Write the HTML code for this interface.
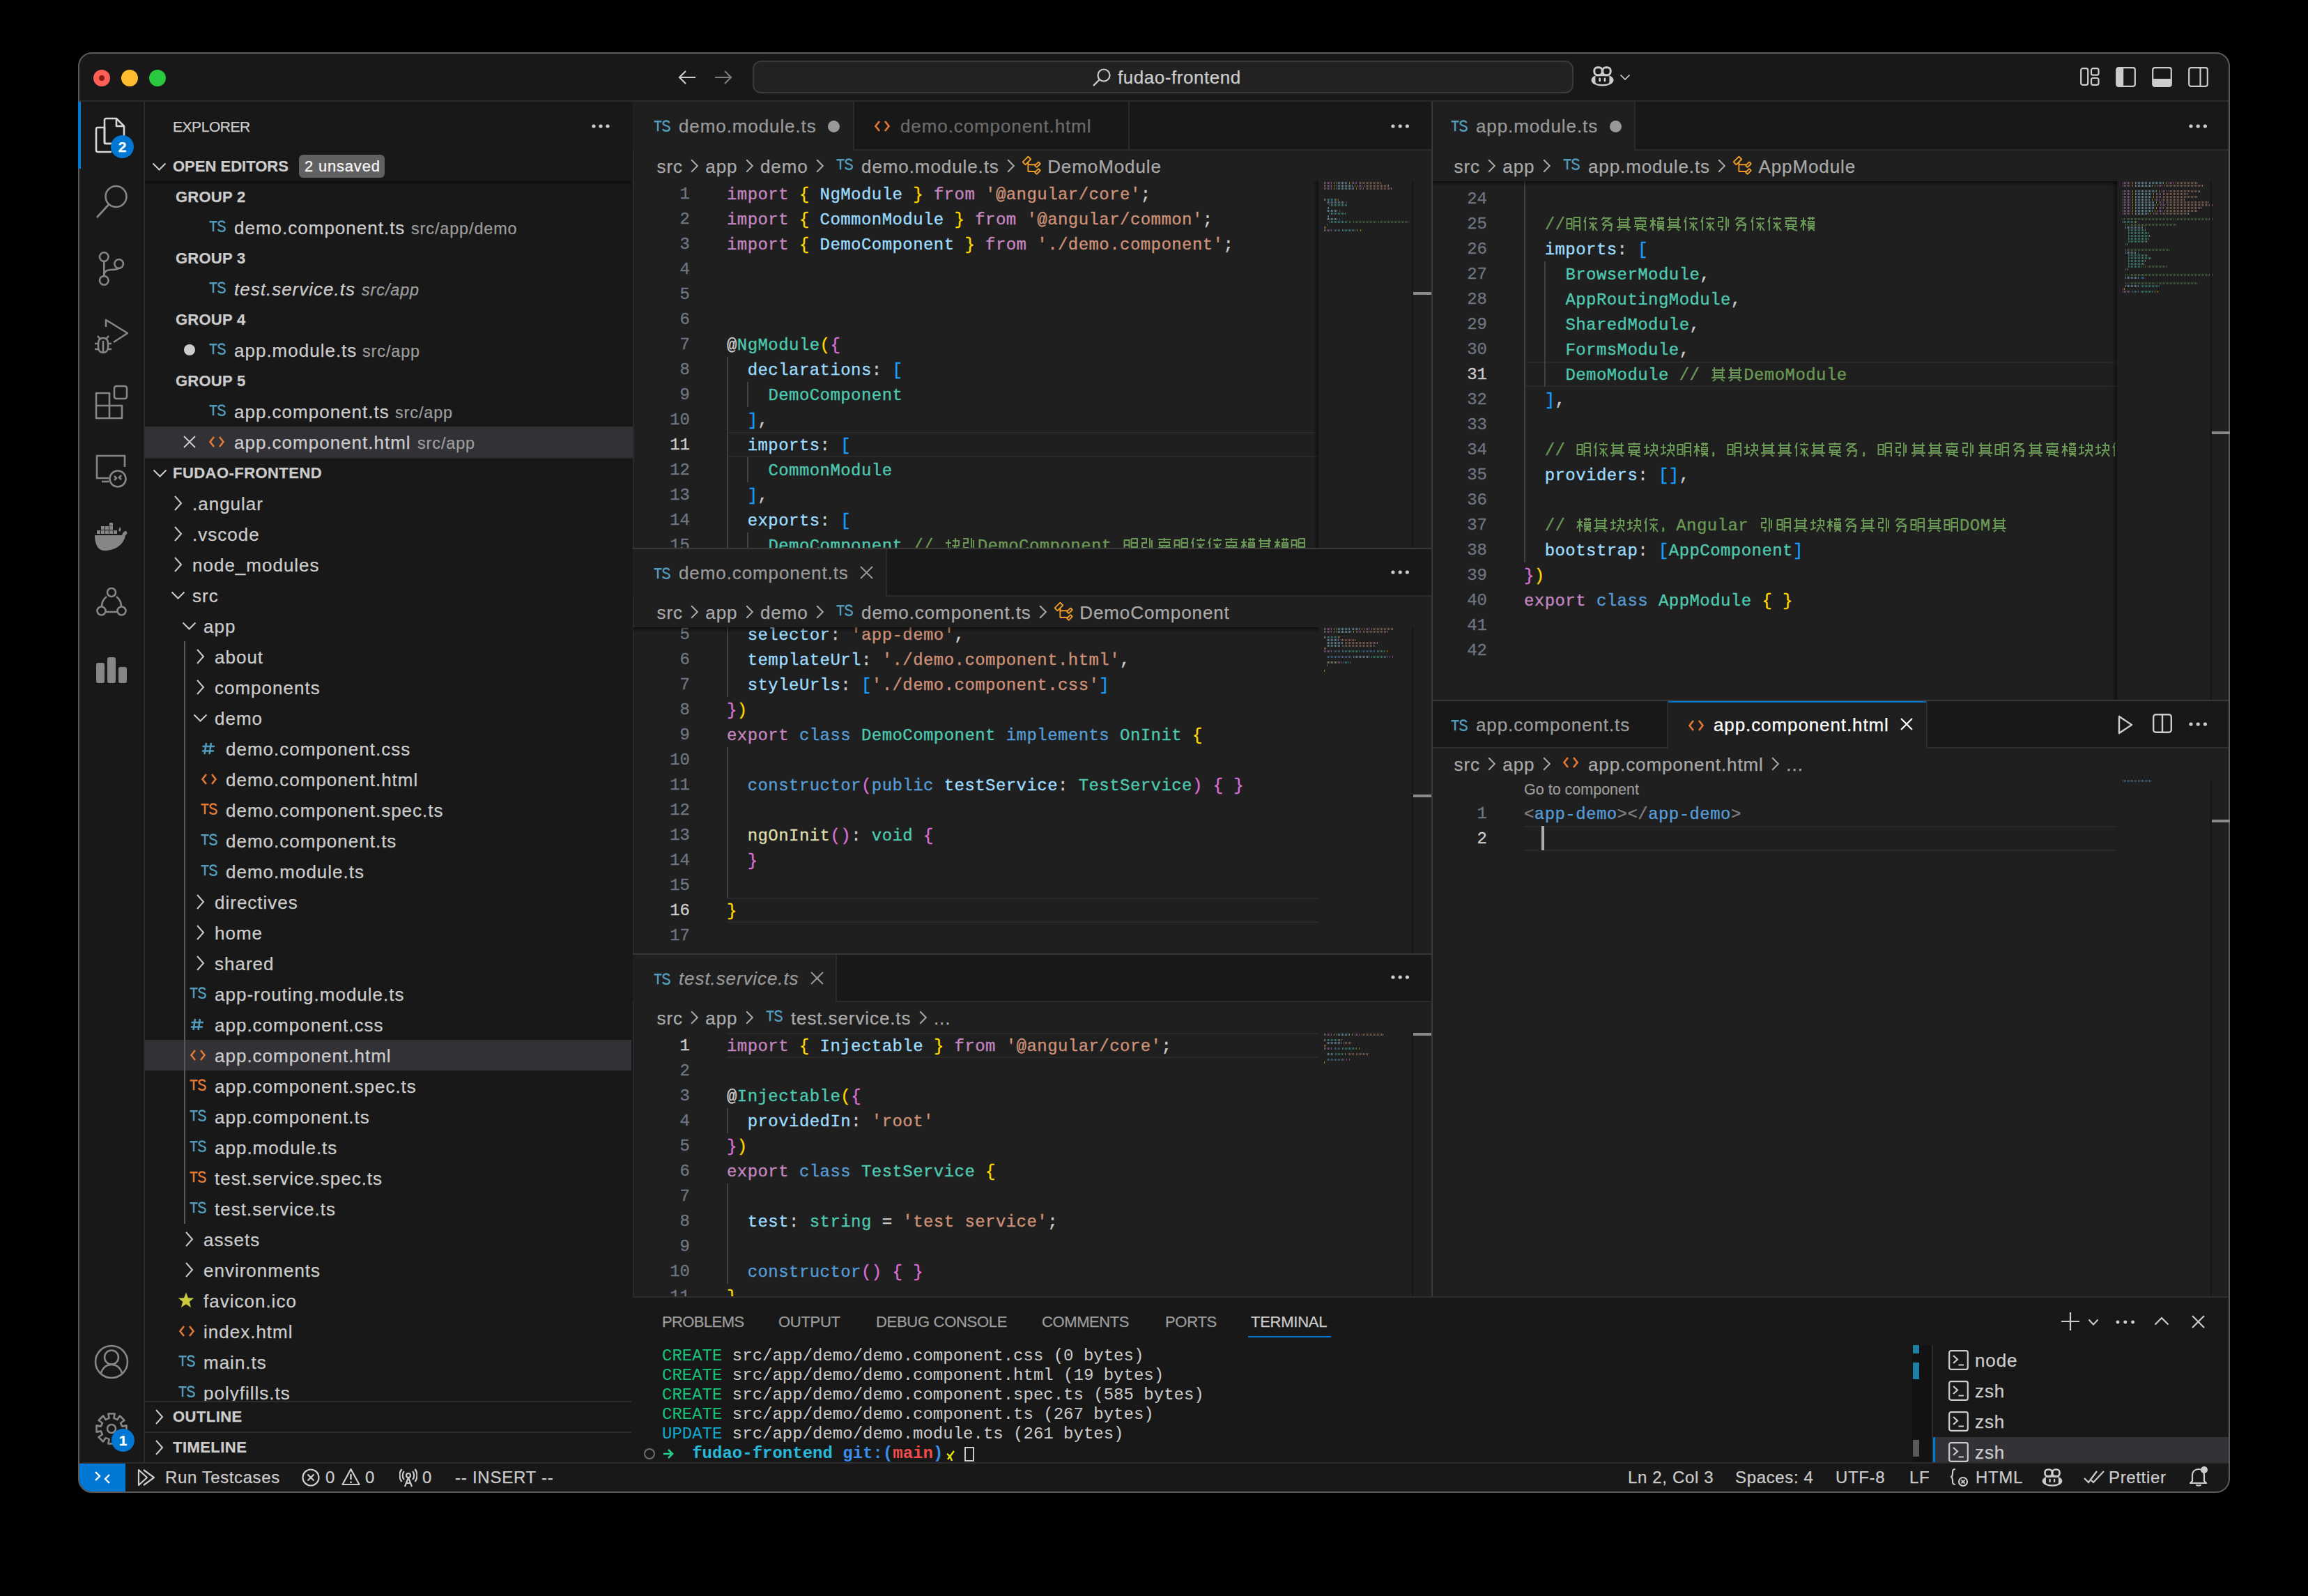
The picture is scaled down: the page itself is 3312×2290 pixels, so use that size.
<!DOCTYPE html><html><head><meta charset="utf-8"><style>
*{margin:0;padding:0;box-sizing:border-box}
html,body{width:3312px;height:2290px;background:#000;overflow:hidden}
body{position:relative;font-family:"Liberation Sans",sans-serif;color:#cccccc}
.a{position:absolute}
.win{position:absolute;left:112px;top:75px;width:3088px;height:2067px;border:2px solid #5a5a5a;border-radius:20px;background:#181818;overflow:hidden}
.ui{font-family:"Liberation Sans",sans-serif;white-space:pre;-webkit-text-stroke:0.25px currentColor}
.mono{font-family:"Liberation Mono",monospace;white-space:pre}
.code{font-family:"Liberation Mono",monospace;font-size:24px;letter-spacing:0.44px;line-height:36px;height:36px;white-space:pre;color:#cccccc;padding-top:1.5px;-webkit-text-stroke:0.35px currentColor}
.ln{font-family:"Liberation Mono",monospace;font-size:24px;line-height:36px;height:36px;text-align:right;color:#6e7681;white-space:pre;padding-top:0.5px;-webkit-text-stroke:0.3px currentColor}
.ln.cur{color:#cccccc}
.cj{display:inline-block;width:24px;height:36px;vertical-align:top;position:relative}
.cj svg{position:absolute;left:1px;top:5px;width:22px;height:22px}
.ig{position:absolute;width:2px;background:#404040}
.hl{position:absolute;border-top:2px solid #282828;border-bottom:2px solid #282828}
svg{display:block}
</style></head><body>
<svg width="0" height="0" style="position:absolute"><defs>
<symbol id="g0" viewBox="0 0 22 22"><path d="M1.5 4h7v14h-7zM1.5 11h7M11.5 2h8.5v19M11.5 2v19M11.5 8h8.5M11.5 14h8.5" fill="none" stroke="currentColor" stroke-width="1.9"/></symbol>
<symbol id="g1" viewBox="0 0 22 22"><path d="M1 7h8M5 2v19M5 8L1 16M5 8l4 6M11 3h10M14 1v5M18 1v5M12 8h8v6h-8zM12 11h8M11 17h10M16 14v3L12 21M16 17l5 4" fill="none" stroke="currentColor" stroke-width="1.9"/></symbol>
<symbol id="g2" viewBox="0 0 22 22"><path d="M5 1L2 9M4 6v15M9 4h12M15 1v3M10 9l4 3-4 6M15 9v12M15 13l6 8M20 9l-3 3" fill="none" stroke="currentColor" stroke-width="1.9"/></symbol>
<symbol id="g3" viewBox="0 0 22 22"><path d="M5 1v15M17 1v15M2 5h18M5 9h12M5 13h12M1 16h20M7 18l-4 3M15 18l4 3" fill="none" stroke="currentColor" stroke-width="1.9"/></symbol>
<symbol id="g4" viewBox="0 0 22 22"><path d="M1 8h8M5 3v14M1 18l8-3M11 5h9v7M10 12h11M15 1v11M15 12l-5 9M16 14l5 7" fill="none" stroke="currentColor" stroke-width="1.9"/></symbol>
<symbol id="g5" viewBox="0 0 22 22"><path d="M7 1L3 6M6 3h10l-12 9M8 6l11 6M5 13h13l-1 8-3-1M10 13l-5 8" fill="none" stroke="currentColor" stroke-width="1.9"/></symbol>
<symbol id="g6" viewBox="0 0 22 22"><path d="M2 2h7v6H3v7h6l-1 5-2-1M14 1v20M17 4v12" fill="none" stroke="currentColor" stroke-width="1.9"/></symbol>
<symbol id="g7" viewBox="0 0 22 22"><path d="M2 3h18M11 1v4M4 7h14v5H4zM2 15h18M8 12l-2 9M14 12v7l6 2M6 18h9" fill="none" stroke="currentColor" stroke-width="1.9"/></symbol>
<symbol id="gc" viewBox="0 0 22 22"><path d="M4 15q2 2 0 6" fill="none" stroke="currentColor" stroke-width="2.5"/></symbol>
</defs></svg>
<div class="win"></div>
<div class="a" style="left:114px;top:144px;width:3084px;height:2px;background:#2b2b2b;"></div>
<div class="a" style="left:206px;top:146px;width:2px;height:1952px;background:#2b2b2b;"></div>
<div class="a" style="left:908px;top:146px;width:2px;height:1952px;background:#2b2b2b;"></div>
<div class="a" style="left:910px;top:146px;width:2288px;height:1714px;background:#1f1f1f;"></div>
<div class="a" style="left:2054px;top:146px;width:2px;height:1714px;background:#383838;"></div>
<div class="a" style="left:908px;top:786px;width:1146px;height:2px;background:#383838;"></div>
<div class="a" style="left:908px;top:1368px;width:1146px;height:2px;background:#383838;"></div>
<div class="a" style="left:2056px;top:1004px;width:1142px;height:2px;background:#383838;"></div>
<div class="a" style="left:908px;top:1860px;width:2290px;height:2px;background:#2b2b2b;"></div>
<div class="a" style="left:908px;top:1862px;width:2290px;height:236px;background:#181818;"></div>
<div class="a" style="left:114px;top:2098px;width:3084px;height:2px;background:#2b2b2b;"></div>
<div class="a" style="left:134px;top:100px;width:24px;height:24px;border-radius:12px;background:#ff5f57"></div>
<div class="a" style="left:174px;top:100px;width:24px;height:24px;border-radius:12px;background:#febc2e"></div>
<div class="a" style="left:214px;top:100px;width:24px;height:24px;border-radius:12px;background:#28c840"></div>
<div class="a" style="left:142px;top:108px;width:8px;height:8px;border-radius:4px;background:#8c1a10"></div>
<svg class="a" style="left:973px;top:100px;" width="26" height="22" viewBox="0 0 26 22"><path d="M25 11H2M11 2L2 11L11 20" fill="none" stroke="#cccccc" stroke-width="2.2"/></svg>
<svg class="a" style="left:1025px;top:100px;" width="26" height="22" viewBox="0 0 26 22"><path d="M1 11H24M15 2L24 11L15 20" fill="none" stroke="#7d7d7d" stroke-width="2.2"/></svg>
<div class="a" style="left:1080px;top:87px;width:1178px;height:47px;border:2px solid #3a3a3a;border-radius:12px;background:#222222"></div>
<svg class="a" style="left:1567px;top:97px;" width="28" height="28" viewBox="0 0 28 28"><circle cx="17" cy="11" r="8.5" fill="none" stroke="#cccccc" stroke-width="2.2"/><path d="M11 17L2 26" stroke="#cccccc" stroke-width="2.4"/></svg>
<div class="a ui" style="left:1604px;top:88px;height:46px;line-height:46px;font-size:26px;color:#cccccc;letter-spacing:0.55px;font-weight:normal;font-style:normal;font-family:'Liberation Sans',sans-serif;">fudao-frontend</div>
<svg class="a" style="left:2283px;top:95px;" width="33" height="29" viewBox="0 0 33 29"><g><ellipse cx="16.5" cy="20" rx="16" ry="8.6" fill="#cccccc"/><path d="M6.4 14.2H26.4V23Q26.4 25.8 16.4 26Q6.4 25.8 6.4 23Z" fill="#181818"/><rect x="4.8" y="1.7" width="11.4" height="11" rx="4.6" fill="#181818" stroke="#cccccc" stroke-width="3"/><rect x="16.8" y="1.7" width="11.4" height="11" rx="4.6" fill="#181818" stroke="#cccccc" stroke-width="3"/><rect x="11.3" y="16.5" width="2.7" height="5.8" rx="1.35" fill="#cccccc"/><rect x="18.6" y="16.5" width="2.7" height="5.8" rx="1.35" fill="#cccccc"/></g></svg>
<svg class="a" style="left:2323.5px;top:106px;" width="16" height="9.5" viewBox="0 0 16 9.5"><path d="M1.5 1.5L8.0 8.0L14.5 1.5" fill="none" stroke="#cccccc" stroke-width="1.7"/></svg>
<svg class="a" style="left:2985px;top:97px;" width="28" height="26" viewBox="0 0 28 26"><rect x="1.2" y="1.2" width="10" height="23.6" rx="2.5" fill="none" stroke="#cccccc" stroke-width="2.2"/><rect x="16" y="1.2" width="10.5" height="9.5" rx="2.5" fill="none" stroke="#cccccc" stroke-width="2.2"/><rect x="16" y="15" width="10.5" height="9.8" rx="2.5" fill="none" stroke="#cccccc" stroke-width="2.2"/></svg>
<svg class="a" style="left:3036px;top:96px;" width="29" height="29" viewBox="0 0 29 29"><rect x="1.2" y="1.2" width="26.6" height="26.6" rx="3" fill="none" stroke="#cccccc" stroke-width="2.2"/><rect x="1.2" y="1.2" width="10" height="26.6" rx="2" fill="#cccccc"/></svg>
<svg class="a" style="left:3088px;top:96px;" width="29" height="29" viewBox="0 0 29 29"><rect x="1.2" y="1.2" width="26.6" height="26.6" rx="3" fill="none" stroke="#cccccc" stroke-width="2.2"/><rect x="1.2" y="17" width="26.6" height="10.8" rx="2" fill="#cccccc"/></svg>
<svg class="a" style="left:3140px;top:96px;" width="29" height="29" viewBox="0 0 29 29"><rect x="1.2" y="1.2" width="26.6" height="26.6" rx="3" fill="none" stroke="#cccccc" stroke-width="2.2"/><path d="M17.5 1.2V27.8" stroke="#cccccc" stroke-width="2.2"/></svg>
<div class="a" style="left:112px;top:146px;width:4px;height:96px;background:#0078d4;"></div>
<svg class="a" style="left:136px;top:168px;" width="46" height="52" viewBox="0 0 46 52"><g fill="none" stroke="#d7d7d7" stroke-width="2.6" stroke-linejoin="round"><path d="M4 15H14V38H30"/><path d="M4 15Q2 15 2 17.5V47.5Q2 50 4.5 50H24"/><path d="M16.5 2H31L42 13V35.5Q42 38 39.5 38H16.5Q14 38 14 35.5V4.5Q14 2 16.5 2Z"/><path d="M31 2.5V13H41.5"/></g></svg>
<div class="a" style="left:159px;top:194px;width:33px;height:33px;border-radius:17px;background:#0078d4"></div>
<div class="a ui" style="left:159px;top:194px;height:33px;line-height:33px;font-size:21px;color:#ffffff;letter-spacing:0px;font-weight:bold;font-style:normal;font-family:'Liberation Sans',sans-serif;width:33px;text-align:center">2</div>
<svg class="a" style="left:136px;top:264px;" width="50" height="52" viewBox="0 0 50 52"><circle cx="30.5" cy="18" r="15" fill="none" stroke="#868686" stroke-width="2.6"/><path d="M20 29.5L3 48" stroke="#868686" stroke-width="2.8"/></svg>
<svg class="a" style="left:140px;top:359px;" width="42" height="52" viewBox="0 0 42 52"><g fill="none" stroke="#868686" stroke-width="2.6"><circle cx="9.3" cy="9.6" r="6.3"/><circle cx="9.3" cy="43.4" r="6.3"/><circle cx="30.6" cy="19.6" r="6.3"/><path d="M9.3 16V37M9.3 37C9.3 30 13 28 20 28C26 28 29 27 30.3 26"/></g></svg>
<svg class="a" style="left:134px;top:456px;" width="52" height="52" viewBox="0 0 52 52"><g fill="none" stroke="#868686" stroke-width="2.6" stroke-linejoin="round"><path d="M18 13V3L49 22L29 35"/><path d="M7 37C7 31 10 29 14 29C18 29 21 31 21 37V42C21 47 18 50 14 50C10 50 7 47 7 42Z"/><path d="M9.5 30L6 26M18.5 30L22 26M2 37H7M21 37H26M2 45H7M21 45H26M14 33V49"/></g></svg>
<svg class="a" style="left:136px;top:552px;" width="48" height="50" viewBox="0 0 48 50"><g fill="none" stroke="#868686" stroke-width="2.6" stroke-linejoin="round"><rect x="28" y="2" width="18" height="18" rx="3"/><path d="M2 12H21V30H39V48H2Z"/><path d="M2 30H21V48"/></g></svg>
<svg class="a" style="left:136px;top:652px;" width="48" height="48" viewBox="0 0 48 48"><g fill="none" stroke="#868686" stroke-width="2.6"><path d="M20 34H3V2H43V18"/><path d="M10 39H20"/><circle cx="33" cy="35" r="11.5"/><path d="M28 31L31 34L28 37M38 30L35 33L38 36"/></g></svg>
<svg class="a" style="left:134px;top:750px;" width="50" height="42" viewBox="0 0 50 42"><g fill="#868686"><path d="M2 18H41C42 14 44 12 47 12C49 14 49 16 46 18C44 30 33 40 16 40C7 40 2 32 2 18Z"/><rect x="5" y="11" width="5" height="5"/><rect x="11" y="11" width="5" height="5"/><rect x="17" y="11" width="5" height="5"/><rect x="23" y="11" width="5" height="5"/><rect x="29" y="11" width="5" height="5"/><rect x="11" y="5" width="5" height="5"/><rect x="17" y="5" width="5" height="5"/><rect x="23" y="5" width="5" height="5"/><rect x="23" y="0" width="5" height="4.5"/><path d="M38 6C40 8 40 11 38 13L36 11Z"/></g></svg>
<svg class="a" style="left:138px;top:842px;" width="44" height="44" viewBox="0 0 44 44"><g fill="none" stroke="#868686" stroke-width="2.6"><circle cx="22" cy="8" r="6"/><circle cx="7.5" cy="34.5" r="6"/><circle cx="36.5" cy="34.5" r="6"/><path d="M13 36H31M15 14C10 18 8 22 8 28M29 14C34 18 36 22 36 28"/></g></svg>
<svg class="a" style="left:136px;top:942px;" width="48" height="40" viewBox="0 0 48 40"><g fill="#868686"><rect x="2" y="9" width="12" height="29" rx="3"/><rect x="18" y="1" width="12" height="37" rx="3"/><rect x="34" y="15" width="12" height="23" rx="3"/></g></svg>
<svg class="a" style="left:135px;top:1929px;" width="50" height="50" viewBox="0 0 50 50"><g fill="none" stroke="#868686" stroke-width="2.6"><circle cx="25" cy="25" r="23"/><circle cx="25" cy="18.5" r="10"/><path d="M10 41C13 32 19 29 25 29C31 29 37 32 40 41"/></g></svg>
<svg class="a" style="left:135px;top:2025px;" width="50" height="50" viewBox="0 0 50 50"><path d="M46.5 20.4 L46.5 29.6 L40.1 28.4 L38.1 33.3 L43.5 37.0 L37.0 43.5 L33.3 38.1 L28.4 40.1 L29.6 46.5 L20.4 46.5 L21.6 40.1 L16.7 38.1 L13.0 43.5 L6.5 37.0 L11.9 33.3 L9.9 28.4 L3.5 29.6 L3.5 20.4 L9.9 21.6 L11.9 16.7 L6.5 13.0 L13.0 6.5 L16.7 11.9 L21.6 9.9 L20.4 3.5 L29.6 3.5 L28.4 9.9 L33.3 11.9 L37.0 6.5 L43.5 13.0 L38.1 16.7 L40.1 21.6Z" fill="none" stroke="#868686" stroke-width="2.6" stroke-linejoin="round"/><circle cx="25" cy="25" r="6" fill="none" stroke="#868686" stroke-width="2.6"/></svg>
<div class="a" style="left:160px;top:2050px;width:33px;height:33px;border-radius:17px;background:#0078d4"></div>
<div class="a ui" style="left:160px;top:2050px;height:33px;line-height:33px;font-size:21px;color:#ffffff;letter-spacing:0px;font-weight:bold;font-style:normal;font-family:'Liberation Sans',sans-serif;width:33px;text-align:center">1</div>
<div class="a ui" style="left:248px;top:147px;height:70px;line-height:70px;font-size:21px;color:#cccccc;letter-spacing:-0.45px;font-weight:normal;font-style:normal;font-family:'Liberation Sans',sans-serif;">EXPLORER</div>
<svg class="a" style="left:847.6px;top:177px;" width="28" height="8" viewBox="0 0 28 8"><circle cx="4" cy="4" r="2.6" fill="#cccccc"/><circle cx="14" cy="4" r="2.6" fill="#cccccc"/><circle cx="24" cy="4" r="2.6" fill="#cccccc"/></svg>
<svg class="a" style="left:218px;top:233px;" width="21" height="12" viewBox="0 0 21 12"><path d="M1.5 1.5L10.5 10.5L19.5 1.5" fill="none" stroke="#cccccc" stroke-width="2"/></svg>
<div class="a ui" style="left:248px;top:217px;height:44px;line-height:44px;font-size:22px;color:#cccccc;letter-spacing:0px;font-weight:bold;font-style:normal;font-family:'Liberation Sans',sans-serif;">OPEN EDITORS</div>
<div class="a" style="left:429px;top:222px;width:123px;height:33px;border-radius:6px;background:#616161"></div>
<div class="a ui" style="left:437px;top:217px;height:44px;line-height:44px;font-size:22px;color:#f8f8f8;letter-spacing:0.8px;font-weight:normal;font-style:normal;font-family:'Liberation Sans',sans-serif;">2 unsaved</div>
<div class="a" style="left:208px;top:260px;width:698px;height:6px;background:linear-gradient(#0e0e0e,#181818)"></div>
<div class="a ui" style="left:252px;top:261px;height:44px;line-height:44px;font-size:22px;color:#cccccc;letter-spacing:0.25px;font-weight:bold;font-style:normal;font-family:'Liberation Sans',sans-serif;">GROUP 2</div>
<svg class="a" style="left:300px;top:316px;" width="24" height="17" viewBox="0 0 24 17"><path d="M0.5 2.3H11.6M6.05 2.3V16.2" stroke="#519aba" stroke-width="2.5" fill="none"/><path d="M22.6 4.3C21.7 2.6 20.1 1.5 17.9 1.5C15.3 1.5 13.6 2.9 13.6 4.8C13.6 6.9 15.4 7.7 18 8.4C20.9 9.2 22.8 10.1 22.8 12.3C22.8 14.6 20.8 15.9 17.9 15.9C15.6 15.9 13.8 14.9 12.8 13.2" fill="none" stroke="#519aba" stroke-width="2.4"/></svg>
<div class="a ui" style="left:336px;top:305px;height:44px;line-height:44px;font-size:26px;color:#cccccc;letter-spacing:1.0px;font-weight:normal;font-style:normal;font-family:'Liberation Sans',sans-serif;">demo.component.ts</div>
<div class="a ui" style="left:590px;top:306px;height:44px;line-height:44px;font-size:23.4px;color:#9d9d9d;letter-spacing:0.9px;font-weight:normal;font-style:normal;font-family:'Liberation Sans',sans-serif;">src/app/demo</div>
<div class="a ui" style="left:252px;top:349px;height:44px;line-height:44px;font-size:22px;color:#cccccc;letter-spacing:0.25px;font-weight:bold;font-style:normal;font-family:'Liberation Sans',sans-serif;">GROUP 3</div>
<svg class="a" style="left:300px;top:404px;" width="24" height="17" viewBox="0 0 24 17"><path d="M0.5 2.3H11.6M6.05 2.3V16.2" stroke="#519aba" stroke-width="2.5" fill="none"/><path d="M22.6 4.3C21.7 2.6 20.1 1.5 17.9 1.5C15.3 1.5 13.6 2.9 13.6 4.8C13.6 6.9 15.4 7.7 18 8.4C20.9 9.2 22.8 10.1 22.8 12.3C22.8 14.6 20.8 15.9 17.9 15.9C15.6 15.9 13.8 14.9 12.8 13.2" fill="none" stroke="#519aba" stroke-width="2.4"/></svg>
<div class="a ui" style="left:336px;top:393px;height:44px;line-height:44px;font-size:26px;color:#cccccc;letter-spacing:1.0px;font-weight:normal;font-style:italic;font-family:'Liberation Sans',sans-serif;">test.service.ts</div>
<div class="a ui" style="left:519px;top:394px;height:44px;line-height:44px;font-size:23.4px;color:#9d9d9d;letter-spacing:0.9px;font-weight:normal;font-style:italic;font-family:'Liberation Sans',sans-serif;">src/app</div>
<div class="a ui" style="left:252px;top:437px;height:44px;line-height:44px;font-size:22px;color:#cccccc;letter-spacing:0.25px;font-weight:bold;font-style:normal;font-family:'Liberation Sans',sans-serif;">GROUP 4</div>
<div class="a" style="left:264px;top:494px;width:16px;height:16px;border-radius:8px;background:#cccccc"></div>
<svg class="a" style="left:300px;top:492px;" width="24" height="17" viewBox="0 0 24 17"><path d="M0.5 2.3H11.6M6.05 2.3V16.2" stroke="#519aba" stroke-width="2.5" fill="none"/><path d="M22.6 4.3C21.7 2.6 20.1 1.5 17.9 1.5C15.3 1.5 13.6 2.9 13.6 4.8C13.6 6.9 15.4 7.7 18 8.4C20.9 9.2 22.8 10.1 22.8 12.3C22.8 14.6 20.8 15.9 17.9 15.9C15.6 15.9 13.8 14.9 12.8 13.2" fill="none" stroke="#519aba" stroke-width="2.4"/></svg>
<div class="a ui" style="left:336px;top:481px;height:44px;line-height:44px;font-size:26px;color:#cccccc;letter-spacing:1.0px;font-weight:normal;font-style:normal;font-family:'Liberation Sans',sans-serif;">app.module.ts</div>
<div class="a ui" style="left:520px;top:482px;height:44px;line-height:44px;font-size:23.4px;color:#9d9d9d;letter-spacing:0.9px;font-weight:normal;font-style:normal;font-family:'Liberation Sans',sans-serif;">src/app</div>
<div class="a ui" style="left:252px;top:525px;height:44px;line-height:44px;font-size:22px;color:#cccccc;letter-spacing:0.25px;font-weight:bold;font-style:normal;font-family:'Liberation Sans',sans-serif;">GROUP 5</div>
<svg class="a" style="left:300px;top:580px;" width="24" height="17" viewBox="0 0 24 17"><path d="M0.5 2.3H11.6M6.05 2.3V16.2" stroke="#519aba" stroke-width="2.5" fill="none"/><path d="M22.6 4.3C21.7 2.6 20.1 1.5 17.9 1.5C15.3 1.5 13.6 2.9 13.6 4.8C13.6 6.9 15.4 7.7 18 8.4C20.9 9.2 22.8 10.1 22.8 12.3C22.8 14.6 20.8 15.9 17.9 15.9C15.6 15.9 13.8 14.9 12.8 13.2" fill="none" stroke="#519aba" stroke-width="2.4"/></svg>
<div class="a ui" style="left:336px;top:569px;height:44px;line-height:44px;font-size:26px;color:#cccccc;letter-spacing:1.0px;font-weight:normal;font-style:normal;font-family:'Liberation Sans',sans-serif;">app.component.ts</div>
<div class="a ui" style="left:567px;top:570px;height:44px;line-height:44px;font-size:23.4px;color:#9d9d9d;letter-spacing:0.9px;font-weight:normal;font-style:normal;font-family:'Liberation Sans',sans-serif;">src/app</div>
<div class="a" style="left:208px;top:612px;width:700px;height:44px;background:#313136;"></div>
<svg class="a" style="left:263px;top:625px;" width="18" height="18" viewBox="0 0 18 18"><path d="M1 1L17 17M17 1L1 17" fill="none" stroke="#cccccc" stroke-width="2"/></svg>
<svg class="a" style="left:300px;top:625px;" width="22" height="18" viewBox="0 0 22 18"><path d="M7 2L1.5 9L7 16M15 2L20.5 9L15 16" fill="none" stroke="#e37933" stroke-width="2.6" stroke-linejoin="miter"/></svg>
<div class="a ui" style="left:336px;top:613px;height:44px;line-height:44px;font-size:26px;color:#cccccc;letter-spacing:1.0px;font-weight:normal;font-style:normal;font-family:'Liberation Sans',sans-serif;">app.component.html</div>
<div class="a ui" style="left:599px;top:614px;height:44px;line-height:44px;font-size:23.4px;color:#9d9d9d;letter-spacing:0.9px;font-weight:normal;font-style:normal;font-family:'Liberation Sans',sans-serif;">src/app</div>
<div class="a" style="left:208px;top:656px;width:700px;height:2px;background:#2b2b2b;"></div>
<svg class="a" style="left:219px;top:673px;" width="21" height="12" viewBox="0 0 21 12"><path d="M1.5 1.5L10.5 10.5L19.5 1.5" fill="none" stroke="#cccccc" stroke-width="2"/></svg>
<div class="a ui" style="left:248px;top:657px;height:44px;line-height:44px;font-size:22px;color:#cccccc;letter-spacing:0.45px;font-weight:bold;font-style:normal;font-family:'Liberation Sans',sans-serif;">FUDAO-FRONTEND</div>
<div class="a" style="left:208px;top:700px;width:698px;height:1310px;overflow:hidden">
<div class="a" style="left:0px;top:792px;width:700px;height:44px;background:#313136;"></div>
<div class="a" style="left:56px;top:220px;width:2px;height:836px;background:#585858;"></div>
<svg class="a" style="left:41px;top:10px;" width="13" height="24" viewBox="0 0 13 24"><path d="M2 2L11 12.0L2 22" fill="none" stroke="#cccccc" stroke-width="2"/></svg>
<div class="a ui" style="left:68px;top:1px;height:44px;line-height:44px;font-size:26px;color:#cccccc;letter-spacing:1.0px;font-weight:normal;font-style:normal;font-family:'Liberation Sans',sans-serif;">.angular</div>
<svg class="a" style="left:41px;top:54px;" width="13" height="24" viewBox="0 0 13 24"><path d="M2 2L11 12.0L2 22" fill="none" stroke="#cccccc" stroke-width="2"/></svg>
<div class="a ui" style="left:68px;top:45px;height:44px;line-height:44px;font-size:26px;color:#cccccc;letter-spacing:1.0px;font-weight:normal;font-style:normal;font-family:'Liberation Sans',sans-serif;">.vscode</div>
<svg class="a" style="left:41px;top:98px;" width="13" height="24" viewBox="0 0 13 24"><path d="M2 2L11 12.0L2 22" fill="none" stroke="#cccccc" stroke-width="2"/></svg>
<div class="a ui" style="left:68px;top:89px;height:44px;line-height:44px;font-size:26px;color:#cccccc;letter-spacing:1.0px;font-weight:normal;font-style:normal;font-family:'Liberation Sans',sans-serif;">node_modules</div>
<svg class="a" style="left:37px;top:148px;" width="21" height="12" viewBox="0 0 21 12"><path d="M1.5 1.5L10.5 10.5L19.5 1.5" fill="none" stroke="#cccccc" stroke-width="2"/></svg>
<div class="a ui" style="left:68px;top:133px;height:44px;line-height:44px;font-size:26px;color:#cccccc;letter-spacing:1.0px;font-weight:normal;font-style:normal;font-family:'Liberation Sans',sans-serif;">src</div>
<svg class="a" style="left:53px;top:192px;" width="21" height="12" viewBox="0 0 21 12"><path d="M1.5 1.5L10.5 10.5L19.5 1.5" fill="none" stroke="#cccccc" stroke-width="2"/></svg>
<div class="a ui" style="left:84px;top:177px;height:44px;line-height:44px;font-size:26px;color:#cccccc;letter-spacing:1.0px;font-weight:normal;font-style:normal;font-family:'Liberation Sans',sans-serif;">app</div>
<svg class="a" style="left:73px;top:230px;" width="13" height="24" viewBox="0 0 13 24"><path d="M2 2L11 12.0L2 22" fill="none" stroke="#cccccc" stroke-width="2"/></svg>
<div class="a ui" style="left:100px;top:221px;height:44px;line-height:44px;font-size:26px;color:#cccccc;letter-spacing:1.0px;font-weight:normal;font-style:normal;font-family:'Liberation Sans',sans-serif;">about</div>
<svg class="a" style="left:73px;top:274px;" width="13" height="24" viewBox="0 0 13 24"><path d="M2 2L11 12.0L2 22" fill="none" stroke="#cccccc" stroke-width="2"/></svg>
<div class="a ui" style="left:100px;top:265px;height:44px;line-height:44px;font-size:26px;color:#cccccc;letter-spacing:1.0px;font-weight:normal;font-style:normal;font-family:'Liberation Sans',sans-serif;">components</div>
<svg class="a" style="left:69px;top:324px;" width="21" height="12" viewBox="0 0 21 12"><path d="M1.5 1.5L10.5 10.5L19.5 1.5" fill="none" stroke="#cccccc" stroke-width="2"/></svg>
<div class="a ui" style="left:100px;top:309px;height:44px;line-height:44px;font-size:26px;color:#cccccc;letter-spacing:1.0px;font-weight:normal;font-style:normal;font-family:'Liberation Sans',sans-serif;">demo</div>
<svg class="a" style="left:81px;top:365px;" width="20" height="18" viewBox="0 0 20 18"><path d="M7 1L4.5 17M14 1L11.5 17M1.5 6H19M1 12.5H18" fill="none" stroke="#519aba" stroke-width="2.6"/></svg>
<div class="a ui" style="left:116px;top:353px;height:44px;line-height:44px;font-size:26px;color:#cccccc;letter-spacing:1.0px;font-weight:normal;font-style:normal;font-family:'Liberation Sans',sans-serif;">demo.component.css</div>
<svg class="a" style="left:81px;top:409px;" width="22" height="18" viewBox="0 0 22 18"><path d="M7 2L1.5 9L7 16M15 2L20.5 9L15 16" fill="none" stroke="#e37933" stroke-width="2.6" stroke-linejoin="miter"/></svg>
<div class="a ui" style="left:116px;top:397px;height:44px;line-height:44px;font-size:26px;color:#cccccc;letter-spacing:1.0px;font-weight:normal;font-style:normal;font-family:'Liberation Sans',sans-serif;">demo.component.html</div>
<svg class="a" style="left:80px;top:452px;" width="24" height="17" viewBox="0 0 24 17"><path d="M0.5 2.3H11.6M6.05 2.3V16.2" stroke="#e37933" stroke-width="2.5" fill="none"/><path d="M22.6 4.3C21.7 2.6 20.1 1.5 17.9 1.5C15.3 1.5 13.6 2.9 13.6 4.8C13.6 6.9 15.4 7.7 18 8.4C20.9 9.2 22.8 10.1 22.8 12.3C22.8 14.6 20.8 15.9 17.9 15.9C15.6 15.9 13.8 14.9 12.8 13.2" fill="none" stroke="#e37933" stroke-width="2.4"/></svg>
<div class="a ui" style="left:116px;top:441px;height:44px;line-height:44px;font-size:26px;color:#cccccc;letter-spacing:1.0px;font-weight:normal;font-style:normal;font-family:'Liberation Sans',sans-serif;">demo.component.spec.ts</div>
<svg class="a" style="left:80px;top:496px;" width="24" height="17" viewBox="0 0 24 17"><path d="M0.5 2.3H11.6M6.05 2.3V16.2" stroke="#519aba" stroke-width="2.5" fill="none"/><path d="M22.6 4.3C21.7 2.6 20.1 1.5 17.9 1.5C15.3 1.5 13.6 2.9 13.6 4.8C13.6 6.9 15.4 7.7 18 8.4C20.9 9.2 22.8 10.1 22.8 12.3C22.8 14.6 20.8 15.9 17.9 15.9C15.6 15.9 13.8 14.9 12.8 13.2" fill="none" stroke="#519aba" stroke-width="2.4"/></svg>
<div class="a ui" style="left:116px;top:485px;height:44px;line-height:44px;font-size:26px;color:#cccccc;letter-spacing:1.0px;font-weight:normal;font-style:normal;font-family:'Liberation Sans',sans-serif;">demo.component.ts</div>
<svg class="a" style="left:80px;top:540px;" width="24" height="17" viewBox="0 0 24 17"><path d="M0.5 2.3H11.6M6.05 2.3V16.2" stroke="#519aba" stroke-width="2.5" fill="none"/><path d="M22.6 4.3C21.7 2.6 20.1 1.5 17.9 1.5C15.3 1.5 13.6 2.9 13.6 4.8C13.6 6.9 15.4 7.7 18 8.4C20.9 9.2 22.8 10.1 22.8 12.3C22.8 14.6 20.8 15.9 17.9 15.9C15.6 15.9 13.8 14.9 12.8 13.2" fill="none" stroke="#519aba" stroke-width="2.4"/></svg>
<div class="a ui" style="left:116px;top:529px;height:44px;line-height:44px;font-size:26px;color:#cccccc;letter-spacing:1.0px;font-weight:normal;font-style:normal;font-family:'Liberation Sans',sans-serif;">demo.module.ts</div>
<svg class="a" style="left:73px;top:582px;" width="13" height="24" viewBox="0 0 13 24"><path d="M2 2L11 12.0L2 22" fill="none" stroke="#cccccc" stroke-width="2"/></svg>
<div class="a ui" style="left:100px;top:573px;height:44px;line-height:44px;font-size:26px;color:#cccccc;letter-spacing:1.0px;font-weight:normal;font-style:normal;font-family:'Liberation Sans',sans-serif;">directives</div>
<svg class="a" style="left:73px;top:626px;" width="13" height="24" viewBox="0 0 13 24"><path d="M2 2L11 12.0L2 22" fill="none" stroke="#cccccc" stroke-width="2"/></svg>
<div class="a ui" style="left:100px;top:617px;height:44px;line-height:44px;font-size:26px;color:#cccccc;letter-spacing:1.0px;font-weight:normal;font-style:normal;font-family:'Liberation Sans',sans-serif;">home</div>
<svg class="a" style="left:73px;top:670px;" width="13" height="24" viewBox="0 0 13 24"><path d="M2 2L11 12.0L2 22" fill="none" stroke="#cccccc" stroke-width="2"/></svg>
<div class="a ui" style="left:100px;top:661px;height:44px;line-height:44px;font-size:26px;color:#cccccc;letter-spacing:1.0px;font-weight:normal;font-style:normal;font-family:'Liberation Sans',sans-serif;">shared</div>
<svg class="a" style="left:64px;top:716px;" width="24" height="17" viewBox="0 0 24 17"><path d="M0.5 2.3H11.6M6.05 2.3V16.2" stroke="#519aba" stroke-width="2.5" fill="none"/><path d="M22.6 4.3C21.7 2.6 20.1 1.5 17.9 1.5C15.3 1.5 13.6 2.9 13.6 4.8C13.6 6.9 15.4 7.7 18 8.4C20.9 9.2 22.8 10.1 22.8 12.3C22.8 14.6 20.8 15.9 17.9 15.9C15.6 15.9 13.8 14.9 12.8 13.2" fill="none" stroke="#519aba" stroke-width="2.4"/></svg>
<div class="a ui" style="left:100px;top:705px;height:44px;line-height:44px;font-size:26px;color:#cccccc;letter-spacing:1.0px;font-weight:normal;font-style:normal;font-family:'Liberation Sans',sans-serif;">app-routing.module.ts</div>
<svg class="a" style="left:65px;top:761px;" width="20" height="18" viewBox="0 0 20 18"><path d="M7 1L4.5 17M14 1L11.5 17M1.5 6H19M1 12.5H18" fill="none" stroke="#519aba" stroke-width="2.6"/></svg>
<div class="a ui" style="left:100px;top:749px;height:44px;line-height:44px;font-size:26px;color:#cccccc;letter-spacing:1.0px;font-weight:normal;font-style:normal;font-family:'Liberation Sans',sans-serif;">app.component.css</div>
<svg class="a" style="left:65px;top:805px;" width="22" height="18" viewBox="0 0 22 18"><path d="M7 2L1.5 9L7 16M15 2L20.5 9L15 16" fill="none" stroke="#e37933" stroke-width="2.6" stroke-linejoin="miter"/></svg>
<div class="a ui" style="left:100px;top:793px;height:44px;line-height:44px;font-size:26px;color:#cccccc;letter-spacing:1.0px;font-weight:normal;font-style:normal;font-family:'Liberation Sans',sans-serif;">app.component.html</div>
<svg class="a" style="left:64px;top:848px;" width="24" height="17" viewBox="0 0 24 17"><path d="M0.5 2.3H11.6M6.05 2.3V16.2" stroke="#e37933" stroke-width="2.5" fill="none"/><path d="M22.6 4.3C21.7 2.6 20.1 1.5 17.9 1.5C15.3 1.5 13.6 2.9 13.6 4.8C13.6 6.9 15.4 7.7 18 8.4C20.9 9.2 22.8 10.1 22.8 12.3C22.8 14.6 20.8 15.9 17.9 15.9C15.6 15.9 13.8 14.9 12.8 13.2" fill="none" stroke="#e37933" stroke-width="2.4"/></svg>
<div class="a ui" style="left:100px;top:837px;height:44px;line-height:44px;font-size:26px;color:#cccccc;letter-spacing:1.0px;font-weight:normal;font-style:normal;font-family:'Liberation Sans',sans-serif;">app.component.spec.ts</div>
<svg class="a" style="left:64px;top:892px;" width="24" height="17" viewBox="0 0 24 17"><path d="M0.5 2.3H11.6M6.05 2.3V16.2" stroke="#519aba" stroke-width="2.5" fill="none"/><path d="M22.6 4.3C21.7 2.6 20.1 1.5 17.9 1.5C15.3 1.5 13.6 2.9 13.6 4.8C13.6 6.9 15.4 7.7 18 8.4C20.9 9.2 22.8 10.1 22.8 12.3C22.8 14.6 20.8 15.9 17.9 15.9C15.6 15.9 13.8 14.9 12.8 13.2" fill="none" stroke="#519aba" stroke-width="2.4"/></svg>
<div class="a ui" style="left:100px;top:881px;height:44px;line-height:44px;font-size:26px;color:#cccccc;letter-spacing:1.0px;font-weight:normal;font-style:normal;font-family:'Liberation Sans',sans-serif;">app.component.ts</div>
<svg class="a" style="left:64px;top:936px;" width="24" height="17" viewBox="0 0 24 17"><path d="M0.5 2.3H11.6M6.05 2.3V16.2" stroke="#519aba" stroke-width="2.5" fill="none"/><path d="M22.6 4.3C21.7 2.6 20.1 1.5 17.9 1.5C15.3 1.5 13.6 2.9 13.6 4.8C13.6 6.9 15.4 7.7 18 8.4C20.9 9.2 22.8 10.1 22.8 12.3C22.8 14.6 20.8 15.9 17.9 15.9C15.6 15.9 13.8 14.9 12.8 13.2" fill="none" stroke="#519aba" stroke-width="2.4"/></svg>
<div class="a ui" style="left:100px;top:925px;height:44px;line-height:44px;font-size:26px;color:#cccccc;letter-spacing:1.0px;font-weight:normal;font-style:normal;font-family:'Liberation Sans',sans-serif;">app.module.ts</div>
<svg class="a" style="left:64px;top:980px;" width="24" height="17" viewBox="0 0 24 17"><path d="M0.5 2.3H11.6M6.05 2.3V16.2" stroke="#e37933" stroke-width="2.5" fill="none"/><path d="M22.6 4.3C21.7 2.6 20.1 1.5 17.9 1.5C15.3 1.5 13.6 2.9 13.6 4.8C13.6 6.9 15.4 7.7 18 8.4C20.9 9.2 22.8 10.1 22.8 12.3C22.8 14.6 20.8 15.9 17.9 15.9C15.6 15.9 13.8 14.9 12.8 13.2" fill="none" stroke="#e37933" stroke-width="2.4"/></svg>
<div class="a ui" style="left:100px;top:969px;height:44px;line-height:44px;font-size:26px;color:#cccccc;letter-spacing:1.0px;font-weight:normal;font-style:normal;font-family:'Liberation Sans',sans-serif;">test.service.spec.ts</div>
<svg class="a" style="left:64px;top:1024px;" width="24" height="17" viewBox="0 0 24 17"><path d="M0.5 2.3H11.6M6.05 2.3V16.2" stroke="#519aba" stroke-width="2.5" fill="none"/><path d="M22.6 4.3C21.7 2.6 20.1 1.5 17.9 1.5C15.3 1.5 13.6 2.9 13.6 4.8C13.6 6.9 15.4 7.7 18 8.4C20.9 9.2 22.8 10.1 22.8 12.3C22.8 14.6 20.8 15.9 17.9 15.9C15.6 15.9 13.8 14.9 12.8 13.2" fill="none" stroke="#519aba" stroke-width="2.4"/></svg>
<div class="a ui" style="left:100px;top:1013px;height:44px;line-height:44px;font-size:26px;color:#cccccc;letter-spacing:1.0px;font-weight:normal;font-style:normal;font-family:'Liberation Sans',sans-serif;">test.service.ts</div>
<svg class="a" style="left:57px;top:1066px;" width="13" height="24" viewBox="0 0 13 24"><path d="M2 2L11 12.0L2 22" fill="none" stroke="#cccccc" stroke-width="2"/></svg>
<div class="a ui" style="left:84px;top:1057px;height:44px;line-height:44px;font-size:26px;color:#cccccc;letter-spacing:1.0px;font-weight:normal;font-style:normal;font-family:'Liberation Sans',sans-serif;">assets</div>
<svg class="a" style="left:57px;top:1110px;" width="13" height="24" viewBox="0 0 13 24"><path d="M2 2L11 12.0L2 22" fill="none" stroke="#cccccc" stroke-width="2"/></svg>
<div class="a ui" style="left:84px;top:1101px;height:44px;line-height:44px;font-size:26px;color:#cccccc;letter-spacing:1.0px;font-weight:normal;font-style:normal;font-family:'Liberation Sans',sans-serif;">environments</div>
<svg class="a" style="left:47px;top:1154px;" width="24" height="23" viewBox="0 0 24 23"><path d="M12 0.5L15 8.2L23.3 8.6L16.8 13.8L19 21.9L12 17.3L5 21.9L7.2 13.8L0.7 8.6L9 8.2Z" fill="#cbcb41"/></svg>
<div class="a ui" style="left:84px;top:1145px;height:44px;line-height:44px;font-size:26px;color:#cccccc;letter-spacing:1.0px;font-weight:normal;font-style:normal;font-family:'Liberation Sans',sans-serif;">favicon.ico</div>
<svg class="a" style="left:49px;top:1201px;" width="22" height="18" viewBox="0 0 22 18"><path d="M7 2L1.5 9L7 16M15 2L20.5 9L15 16" fill="none" stroke="#e37933" stroke-width="2.6" stroke-linejoin="miter"/></svg>
<div class="a ui" style="left:84px;top:1189px;height:44px;line-height:44px;font-size:26px;color:#cccccc;letter-spacing:1.0px;font-weight:normal;font-style:normal;font-family:'Liberation Sans',sans-serif;">index.html</div>
<svg class="a" style="left:48px;top:1244px;" width="24" height="17" viewBox="0 0 24 17"><path d="M0.5 2.3H11.6M6.05 2.3V16.2" stroke="#519aba" stroke-width="2.5" fill="none"/><path d="M22.6 4.3C21.7 2.6 20.1 1.5 17.9 1.5C15.3 1.5 13.6 2.9 13.6 4.8C13.6 6.9 15.4 7.7 18 8.4C20.9 9.2 22.8 10.1 22.8 12.3C22.8 14.6 20.8 15.9 17.9 15.9C15.6 15.9 13.8 14.9 12.8 13.2" fill="none" stroke="#519aba" stroke-width="2.4"/></svg>
<div class="a ui" style="left:84px;top:1233px;height:44px;line-height:44px;font-size:26px;color:#cccccc;letter-spacing:1.0px;font-weight:normal;font-style:normal;font-family:'Liberation Sans',sans-serif;">main.ts</div>
<svg class="a" style="left:48px;top:1288px;" width="24" height="17" viewBox="0 0 24 17"><path d="M0.5 2.3H11.6M6.05 2.3V16.2" stroke="#519aba" stroke-width="2.5" fill="none"/><path d="M22.6 4.3C21.7 2.6 20.1 1.5 17.9 1.5C15.3 1.5 13.6 2.9 13.6 4.8C13.6 6.9 15.4 7.7 18 8.4C20.9 9.2 22.8 10.1 22.8 12.3C22.8 14.6 20.8 15.9 17.9 15.9C15.6 15.9 13.8 14.9 12.8 13.2" fill="none" stroke="#519aba" stroke-width="2.4"/></svg>
<div class="a ui" style="left:84px;top:1277px;height:44px;line-height:44px;font-size:26px;color:#cccccc;letter-spacing:1.0px;font-weight:normal;font-style:normal;font-family:'Liberation Sans',sans-serif;">polyfills.ts</div>
</div>
<div class="a" style="left:208px;top:2010px;width:698px;height:2px;background:#2b2b2b;"></div>
<svg class="a" style="left:222px;top:2021px;" width="13" height="24" viewBox="0 0 13 24"><path d="M2 2L11 12.0L2 22" fill="none" stroke="#cccccc" stroke-width="2"/></svg>
<div class="a ui" style="left:248px;top:2011px;height:44px;line-height:44px;font-size:22px;color:#cccccc;letter-spacing:0.45px;font-weight:bold;font-style:normal;font-family:'Liberation Sans',sans-serif;">OUTLINE</div>
<div class="a" style="left:208px;top:2054px;width:698px;height:2px;background:#2b2b2b;"></div>
<svg class="a" style="left:222px;top:2065px;" width="13" height="24" viewBox="0 0 13 24"><path d="M2 2L11 12.0L2 22" fill="none" stroke="#cccccc" stroke-width="2"/></svg>
<div class="a ui" style="left:248px;top:2055px;height:44px;line-height:44px;font-size:22px;color:#cccccc;letter-spacing:0.45px;font-weight:bold;font-style:normal;font-family:'Liberation Sans',sans-serif;">TIMELINE</div>
<div class="a" style="left:908px;top:146px;width:1146px;height:70px;background:#181818;"></div>
<div class="a" style="left:908px;top:214px;width:1146px;height:2px;background:#2b2b2b;"></div>
<div class="a" style="left:908px;top:146px;width:318px;height:70px;background:#1f1f1f;"></div>
<div class="a" style="left:1224px;top:146px;width:2px;height:70px;background:#2b2b2b;"></div>
<svg class="a" style="left:938px;top:172px;" width="24" height="17" viewBox="0 0 24 17"><path d="M0.5 2.3H11.6M6.05 2.3V16.2" stroke="#519aba" stroke-width="2.5" fill="none"/><path d="M22.6 4.3C21.7 2.6 20.1 1.5 17.9 1.5C15.3 1.5 13.6 2.9 13.6 4.8C13.6 6.9 15.4 7.7 18 8.4C20.9 9.2 22.8 10.1 22.8 12.3C22.8 14.6 20.8 15.9 17.9 15.9C15.6 15.9 13.8 14.9 12.8 13.2" fill="none" stroke="#519aba" stroke-width="2.4"/></svg>
<div class="a ui" style="left:974px;top:146px;height:70px;line-height:70px;font-size:26px;color:#999999;letter-spacing:0.9px;font-weight:normal;font-style:normal;font-family:'Liberation Sans',sans-serif;">demo.module.ts</div>
<div class="a" style="left:1188px;top:173px;width:17px;height:17px;border-radius:9px;background:#999999"></div>
<div class="a" style="left:1226px;top:146px;width:395px;height:68px;background:#181818;"></div>
<div class="a" style="left:1619px;top:146px;width:2px;height:68px;background:#2b2b2b;"></div>
<svg class="a" style="left:1255px;top:172px;" width="22" height="18" viewBox="0 0 22 18"><path d="M7 2L1.5 9L7 16M15 2L20.5 9L15 16" fill="none" stroke="#e37933" stroke-width="2.6" stroke-linejoin="miter"/></svg>
<div class="a ui" style="left:1292px;top:146px;height:70px;line-height:70px;font-size:26px;color:#6b6b6b;letter-spacing:0.9px;font-weight:normal;font-style:normal;font-family:'Liberation Sans',sans-serif;">demo.component.html</div>
<svg class="a" style="left:1995px;top:177px;" width="28.4" height="8" viewBox="0 0 28.4 8"><circle cx="4.0" cy="4" r="2.6" fill="#cccccc"/><circle cx="14.2" cy="4" r="2.6" fill="#cccccc"/><circle cx="24.4" cy="4" r="2.6" fill="#cccccc"/></svg>
<div class="a" style="left:942.5px;top:216px;height:44px;display:flex;align-items:center;white-space:pre"><span class="ui" style="font-size:26px;letter-spacing:0.9px;color:#a9a9a9;line-height:44px;position:relative;top:1px">src</span><svg style="margin:0 10.25px 0 11.25px;position:relative;top:0px" width="11" height="20" viewBox="0 0 11 20"><path d="M1.2 1.2L9.8 10L1.2 18.8" fill="none" stroke="#a9a9a9" stroke-width="2"/></svg><span class="ui" style="font-size:26px;letter-spacing:0.9px;color:#a9a9a9;line-height:44px;position:relative;top:1px">app</span><svg style="margin:0 10.25px 0 11.25px;position:relative;top:0px" width="11" height="20" viewBox="0 0 11 20"><path d="M1.2 1.2L9.8 10L1.2 18.8" fill="none" stroke="#a9a9a9" stroke-width="2"/></svg><span class="ui" style="font-size:26px;letter-spacing:0.9px;color:#a9a9a9;line-height:44px;position:relative;top:1px">demo</span><svg style="margin:0 10.25px 0 11.25px;position:relative;top:0px" width="11" height="20" viewBox="0 0 11 20"><path d="M1.2 1.2L9.8 10L1.2 18.8" fill="none" stroke="#a9a9a9" stroke-width="2"/></svg><svg style="margin-left:8px;margin-right:12px;position:relative;top:-3px" width="24" height="17" viewBox="0 0 24 17"><path d="M0.5 2.3H11.6M6.05 2.3V16.2" stroke="#519aba" stroke-width="2.5" fill="none"/><path d="M22.6 4.3C21.7 2.6 20.1 1.5 17.9 1.5C15.3 1.5 13.6 2.9 13.6 4.8C13.6 6.9 15.4 7.7 18 8.4C20.9 9.2 22.8 10.1 22.8 12.3C22.8 14.6 20.8 15.9 17.9 15.9C15.6 15.9 13.8 14.9 12.8 13.2" fill="none" stroke="#519aba" stroke-width="2.4"/></svg><span class="ui" style="font-size:26px;letter-spacing:0.9px;color:#a9a9a9;line-height:44px;position:relative;top:1px">demo.module.ts</span><svg style="margin:0 10.25px 0 11.25px;position:relative;top:0px" width="11" height="20" viewBox="0 0 11 20"><path d="M1.2 1.2L9.8 10L1.2 18.8" fill="none" stroke="#a9a9a9" stroke-width="2"/></svg><svg style="margin-left:-1px;margin-right:7px;position:relative;top:-1px" width="31" height="31" viewBox="0 0 16 16"><path fill="#ee9d28" d="M11.34 9.71h.71l2.67-2.67v-.71L13.38 5h-.7l-1.82 1.81h-5V5.56l1.86-1.85V3l-2-2H5L1 5v.71l2 2h.71l1.14-1.15v5.79l.5.5H10v.52l1.33 1.34h.71l2.67-2.67v-.71L13.37 10h-.7l-1.86 1.85h-5v-4H10v.48l1.34 1.38zm1.69-3.65l.63.63-2 2-.63-.63 2-2zm0 5l.63.63-2 2-.63-.63 2-2zM3.35 6.65l-1.29-1.3 3.29-3.29 1.3 1.29-3.3 3.3z"/></svg><span class="ui" style="font-size:26px;letter-spacing:0.9px;color:#a9a9a9;line-height:44px;position:relative;top:1px">DemoModule</span></div>
<div class="a" style="left:908px;top:260px;width:984px;height:526px;overflow:hidden">
<div class="hl" style="left:135px;top:360px;width:849px;height:36px"></div>
<div class="ig" style="left:135.0px;top:252px;height:288px"></div>
<div class="ig" style="left:163.8px;top:288px;height:36px"></div>
<div class="ig" style="left:163.8px;top:396px;height:36px"></div>
<div class="ig" style="left:163.8px;top:504px;height:36px"></div>
<div class="a ln" style="left:2px;top:0px;width:80px">1</div>
<div class="a code" style="left:135px;top:0px"><span style="color:#c586c0">import</span><span style="color:#cccccc"> </span><span style="color:#ffd700">{</span><span style="color:#cccccc"> </span><span style="color:#9cdcfe">NgModule</span><span style="color:#cccccc"> </span><span style="color:#ffd700">}</span><span style="color:#cccccc"> </span><span style="color:#c586c0">from</span><span style="color:#cccccc"> </span><span style="color:#ce9178">'@angular/core'</span><span style="color:#cccccc">;</span></div>
<div class="a ln" style="left:2px;top:36px;width:80px">2</div>
<div class="a code" style="left:135px;top:36px"><span style="color:#c586c0">import</span><span style="color:#cccccc"> </span><span style="color:#ffd700">{</span><span style="color:#cccccc"> </span><span style="color:#9cdcfe">CommonModule</span><span style="color:#cccccc"> </span><span style="color:#ffd700">}</span><span style="color:#cccccc"> </span><span style="color:#c586c0">from</span><span style="color:#cccccc"> </span><span style="color:#ce9178">'@angular/common'</span><span style="color:#cccccc">;</span></div>
<div class="a ln" style="left:2px;top:72px;width:80px">3</div>
<div class="a code" style="left:135px;top:72px"><span style="color:#c586c0">import</span><span style="color:#cccccc"> </span><span style="color:#ffd700">{</span><span style="color:#cccccc"> </span><span style="color:#9cdcfe">DemoComponent</span><span style="color:#cccccc"> </span><span style="color:#ffd700">}</span><span style="color:#cccccc"> </span><span style="color:#c586c0">from</span><span style="color:#cccccc"> </span><span style="color:#ce9178">'./demo.component'</span><span style="color:#cccccc">;</span></div>
<div class="a ln" style="left:2px;top:108px;width:80px">4</div>
<div class="a ln" style="left:2px;top:144px;width:80px">5</div>
<div class="a ln" style="left:2px;top:180px;width:80px">6</div>
<div class="a ln" style="left:2px;top:216px;width:80px">7</div>
<div class="a code" style="left:135px;top:216px"><span style="color:#cccccc">@</span><span style="color:#4ec9b0">NgModule</span><span style="color:#ffd700">(</span><span style="color:#da70d6">{</span></div>
<div class="a ln" style="left:2px;top:252px;width:80px">8</div>
<div class="a code" style="left:135px;top:252px"><span style="color:#cccccc">  </span><span style="color:#9cdcfe">declarations</span><span style="color:#cccccc">: </span><span style="color:#179fff">[</span></div>
<div class="a ln" style="left:2px;top:288px;width:80px">9</div>
<div class="a code" style="left:135px;top:288px"><span style="color:#cccccc">    </span><span style="color:#4ec9b0">DemoComponent</span></div>
<div class="a ln" style="left:2px;top:324px;width:80px">10</div>
<div class="a code" style="left:135px;top:324px"><span style="color:#cccccc">  </span><span style="color:#179fff">]</span><span style="color:#cccccc">,</span></div>
<div class="a ln cur" style="left:2px;top:360px;width:80px">11</div>
<div class="a code" style="left:135px;top:360px"><span style="color:#cccccc">  </span><span style="color:#9cdcfe">imports</span><span style="color:#cccccc">: </span><span style="color:#179fff">[</span></div>
<div class="a ln" style="left:2px;top:396px;width:80px">12</div>
<div class="a code" style="left:135px;top:396px"><span style="color:#cccccc">    </span><span style="color:#4ec9b0">CommonModule</span></div>
<div class="a ln" style="left:2px;top:432px;width:80px">13</div>
<div class="a code" style="left:135px;top:432px"><span style="color:#cccccc">  </span><span style="color:#179fff">]</span><span style="color:#cccccc">,</span></div>
<div class="a ln" style="left:2px;top:468px;width:80px">14</div>
<div class="a code" style="left:135px;top:468px"><span style="color:#cccccc">  </span><span style="color:#9cdcfe">exports</span><span style="color:#cccccc">: </span><span style="color:#179fff">[</span></div>
<div class="a ln" style="left:2px;top:504px;width:80px">15</div>
<div class="a code" style="left:135px;top:504px"><span style="color:#cccccc">    </span><span style="color:#4ec9b0">DemoComponent</span><span style="color:#cccccc"> </span><span style="color:#6a9955">// <span class="cj"><svg viewBox="0 0 22 22"><use href="#g4"/></svg></span><span class="cj"><svg viewBox="0 0 22 22"><use href="#g6"/></svg></span>DemoComponent <span class="cj"><svg viewBox="0 0 22 22"><use href="#g0"/></svg></span><span class="cj"><svg viewBox="0 0 22 22"><use href="#g6"/></svg></span><span class="cj"><svg viewBox="0 0 22 22"><use href="#g7"/></svg></span><span class="cj"><svg viewBox="0 0 22 22"><use href="#g0"/></svg></span><span class="cj"><svg viewBox="0 0 22 22"><use href="#g2"/></svg></span><span class="cj"><svg viewBox="0 0 22 22"><use href="#g2"/></svg></span><span class="cj"><svg viewBox="0 0 22 22"><use href="#g7"/></svg></span><span class="cj"><svg viewBox="0 0 22 22"><use href="#g1"/></svg></span><span class="cj"><svg viewBox="0 0 22 22"><use href="#g3"/></svg></span><span class="cj"><svg viewBox="0 0 22 22"><use href="#g1"/></svg></span><span class="cj"><svg viewBox="0 0 22 22"><use href="#g0"/></svg></span></span></div>
<div class="a ln" style="left:2px;top:540px;width:80px">16</div>
<div class="a code" style="left:135px;top:540px"><span style="color:#cccccc">  </span><span style="color:#179fff">]</span></div>
<div class="a ln" style="left:2px;top:576px;width:80px">17</div>
<div class="a code" style="left:135px;top:576px"><span style="color:#da70d6">}</span><span style="color:#ffd700">)</span></div>
<div class="a ln" style="left:2px;top:612px;width:80px">18</div>
<div class="a code" style="left:135px;top:612px"><span style="color:#c586c0">export</span><span style="color:#cccccc"> </span><span style="color:#569cd6">class</span><span style="color:#cccccc"> </span><span style="color:#4ec9b0">DemoModule</span><span style="color:#cccccc"> </span><span style="color:#ffd700">{</span><span style="color:#cccccc"> </span><span style="color:#ffd700">}</span></div>
</div>
<div class="a" style="left:1900px;top:260px;width:130px;height:520px;overflow:hidden">
<div class="a" style="left:0px;top:1px;width:12px;height:3px;background:repeating-linear-gradient(90deg,#c586c0 0 1.4px,transparent 1.4px 2px);opacity:.5"></div>
<div class="a" style="left:14px;top:1px;width:2px;height:3px;background:repeating-linear-gradient(90deg,#ffd700 0 1.4px,transparent 1.4px 2px);opacity:.5"></div>
<div class="a" style="left:18px;top:1px;width:16px;height:3px;background:repeating-linear-gradient(90deg,#9cdcfe 0 1.4px,transparent 1.4px 2px);opacity:.5"></div>
<div class="a" style="left:36px;top:1px;width:2px;height:3px;background:repeating-linear-gradient(90deg,#ffd700 0 1.4px,transparent 1.4px 2px);opacity:.5"></div>
<div class="a" style="left:40px;top:1px;width:8px;height:3px;background:repeating-linear-gradient(90deg,#c586c0 0 1.4px,transparent 1.4px 2px);opacity:.5"></div>
<div class="a" style="left:50px;top:1px;width:30px;height:3px;background:repeating-linear-gradient(90deg,#ce9178 0 1.4px,transparent 1.4px 2px);opacity:.5"></div>
<div class="a" style="left:80px;top:1px;width:2px;height:3px;background:repeating-linear-gradient(90deg,#cccccc 0 1.4px,transparent 1.4px 2px);opacity:.5"></div>
<div class="a" style="left:0px;top:5px;width:12px;height:3px;background:repeating-linear-gradient(90deg,#c586c0 0 1.4px,transparent 1.4px 2px);opacity:.5"></div>
<div class="a" style="left:14px;top:5px;width:2px;height:3px;background:repeating-linear-gradient(90deg,#ffd700 0 1.4px,transparent 1.4px 2px);opacity:.5"></div>
<div class="a" style="left:18px;top:5px;width:24px;height:3px;background:repeating-linear-gradient(90deg,#9cdcfe 0 1.4px,transparent 1.4px 2px);opacity:.5"></div>
<div class="a" style="left:44px;top:5px;width:2px;height:3px;background:repeating-linear-gradient(90deg,#ffd700 0 1.4px,transparent 1.4px 2px);opacity:.5"></div>
<div class="a" style="left:48px;top:5px;width:8px;height:3px;background:repeating-linear-gradient(90deg,#c586c0 0 1.4px,transparent 1.4px 2px);opacity:.5"></div>
<div class="a" style="left:58px;top:5px;width:34px;height:3px;background:repeating-linear-gradient(90deg,#ce9178 0 1.4px,transparent 1.4px 2px);opacity:.5"></div>
<div class="a" style="left:92px;top:5px;width:2px;height:3px;background:repeating-linear-gradient(90deg,#cccccc 0 1.4px,transparent 1.4px 2px);opacity:.5"></div>
<div class="a" style="left:0px;top:9px;width:12px;height:3px;background:repeating-linear-gradient(90deg,#c586c0 0 1.4px,transparent 1.4px 2px);opacity:.5"></div>
<div class="a" style="left:14px;top:9px;width:2px;height:3px;background:repeating-linear-gradient(90deg,#ffd700 0 1.4px,transparent 1.4px 2px);opacity:.5"></div>
<div class="a" style="left:18px;top:9px;width:26px;height:3px;background:repeating-linear-gradient(90deg,#9cdcfe 0 1.4px,transparent 1.4px 2px);opacity:.5"></div>
<div class="a" style="left:46px;top:9px;width:2px;height:3px;background:repeating-linear-gradient(90deg,#ffd700 0 1.4px,transparent 1.4px 2px);opacity:.5"></div>
<div class="a" style="left:50px;top:9px;width:8px;height:3px;background:repeating-linear-gradient(90deg,#c586c0 0 1.4px,transparent 1.4px 2px);opacity:.5"></div>
<div class="a" style="left:60px;top:9px;width:36px;height:3px;background:repeating-linear-gradient(90deg,#ce9178 0 1.4px,transparent 1.4px 2px);opacity:.5"></div>
<div class="a" style="left:96px;top:9px;width:2px;height:3px;background:repeating-linear-gradient(90deg,#cccccc 0 1.4px,transparent 1.4px 2px);opacity:.5"></div>
<div class="a" style="left:0px;top:25px;width:2px;height:3px;background:repeating-linear-gradient(90deg,#cccccc 0 1.4px,transparent 1.4px 2px);opacity:.5"></div>
<div class="a" style="left:2px;top:25px;width:16px;height:3px;background:repeating-linear-gradient(90deg,#4ec9b0 0 1.4px,transparent 1.4px 2px);opacity:.5"></div>
<div class="a" style="left:18px;top:25px;width:2px;height:3px;background:repeating-linear-gradient(90deg,#ffd700 0 1.4px,transparent 1.4px 2px);opacity:.5"></div>
<div class="a" style="left:20px;top:25px;width:2px;height:3px;background:repeating-linear-gradient(90deg,#da70d6 0 1.4px,transparent 1.4px 2px);opacity:.5"></div>
<div class="a" style="left:4px;top:29px;width:24px;height:3px;background:repeating-linear-gradient(90deg,#9cdcfe 0 1.4px,transparent 1.4px 2px);opacity:.5"></div>
<div class="a" style="left:28px;top:29px;width:2px;height:3px;background:repeating-linear-gradient(90deg,#cccccc 0 1.4px,transparent 1.4px 2px);opacity:.5"></div>
<div class="a" style="left:32px;top:29px;width:2px;height:3px;background:repeating-linear-gradient(90deg,#179fff 0 1.4px,transparent 1.4px 2px);opacity:.5"></div>
<div class="a" style="left:8px;top:33px;width:26px;height:3px;background:repeating-linear-gradient(90deg,#4ec9b0 0 1.4px,transparent 1.4px 2px);opacity:.5"></div>
<div class="a" style="left:4px;top:37px;width:2px;height:3px;background:repeating-linear-gradient(90deg,#179fff 0 1.4px,transparent 1.4px 2px);opacity:.5"></div>
<div class="a" style="left:6px;top:37px;width:2px;height:3px;background:repeating-linear-gradient(90deg,#cccccc 0 1.4px,transparent 1.4px 2px);opacity:.5"></div>
<div class="a" style="left:4px;top:41px;width:14px;height:3px;background:repeating-linear-gradient(90deg,#9cdcfe 0 1.4px,transparent 1.4px 2px);opacity:.5"></div>
<div class="a" style="left:18px;top:41px;width:2px;height:3px;background:repeating-linear-gradient(90deg,#cccccc 0 1.4px,transparent 1.4px 2px);opacity:.5"></div>
<div class="a" style="left:22px;top:41px;width:2px;height:3px;background:repeating-linear-gradient(90deg,#179fff 0 1.4px,transparent 1.4px 2px);opacity:.5"></div>
<div class="a" style="left:8px;top:45px;width:24px;height:3px;background:repeating-linear-gradient(90deg,#4ec9b0 0 1.4px,transparent 1.4px 2px);opacity:.5"></div>
<div class="a" style="left:4px;top:49px;width:2px;height:3px;background:repeating-linear-gradient(90deg,#179fff 0 1.4px,transparent 1.4px 2px);opacity:.5"></div>
<div class="a" style="left:6px;top:49px;width:2px;height:3px;background:repeating-linear-gradient(90deg,#cccccc 0 1.4px,transparent 1.4px 2px);opacity:.5"></div>
<div class="a" style="left:4px;top:53px;width:14px;height:3px;background:repeating-linear-gradient(90deg,#9cdcfe 0 1.4px,transparent 1.4px 2px);opacity:.5"></div>
<div class="a" style="left:18px;top:53px;width:2px;height:3px;background:repeating-linear-gradient(90deg,#cccccc 0 1.4px,transparent 1.4px 2px);opacity:.5"></div>
<div class="a" style="left:22px;top:53px;width:2px;height:3px;background:repeating-linear-gradient(90deg,#179fff 0 1.4px,transparent 1.4px 2px);opacity:.5"></div>
<div class="a" style="left:8px;top:57px;width:26px;height:3px;background:repeating-linear-gradient(90deg,#4ec9b0 0 1.4px,transparent 1.4px 2px);opacity:.5"></div>
<div class="a" style="left:36px;top:57px;width:4px;height:3px;background:repeating-linear-gradient(90deg,#6a9955 0 1.4px,transparent 1.4px 2px);opacity:.5"></div>
<div class="a" style="left:42px;top:57px;width:34px;height:3px;background:repeating-linear-gradient(90deg,#6a9955 0 1.4px,transparent 1.4px 2px);opacity:.5"></div>
<div class="a" style="left:78px;top:57px;width:44px;height:3px;background:repeating-linear-gradient(90deg,#6a9955 0 1.4px,transparent 1.4px 2px);opacity:.5"></div>
<div class="a" style="left:4px;top:61px;width:2px;height:3px;background:repeating-linear-gradient(90deg,#179fff 0 1.4px,transparent 1.4px 2px);opacity:.5"></div>
<div class="a" style="left:0px;top:65px;width:2px;height:3px;background:repeating-linear-gradient(90deg,#da70d6 0 1.4px,transparent 1.4px 2px);opacity:.5"></div>
<div class="a" style="left:2px;top:65px;width:2px;height:3px;background:repeating-linear-gradient(90deg,#ffd700 0 1.4px,transparent 1.4px 2px);opacity:.5"></div>
<div class="a" style="left:0px;top:69px;width:12px;height:3px;background:repeating-linear-gradient(90deg,#c586c0 0 1.4px,transparent 1.4px 2px);opacity:.5"></div>
<div class="a" style="left:14px;top:69px;width:10px;height:3px;background:repeating-linear-gradient(90deg,#569cd6 0 1.4px,transparent 1.4px 2px);opacity:.5"></div>
<div class="a" style="left:26px;top:69px;width:20px;height:3px;background:repeating-linear-gradient(90deg,#4ec9b0 0 1.4px,transparent 1.4px 2px);opacity:.5"></div>
<div class="a" style="left:48px;top:69px;width:2px;height:3px;background:repeating-linear-gradient(90deg,#ffd700 0 1.4px,transparent 1.4px 2px);opacity:.5"></div>
<div class="a" style="left:52px;top:69px;width:2px;height:3px;background:repeating-linear-gradient(90deg,#ffd700 0 1.4px,transparent 1.4px 2px);opacity:.5"></div>
</div>
<div class="a" style="left:1884px;top:260px;width:8px;height:526px;background:linear-gradient(90deg,rgba(0,0,0,0),rgba(0,0,0,.45))"></div>
<div class="a" style="left:2026px;top:260px;width:2px;height:526px;background:#161616;"></div>
<div class="a" style="left:2028px;top:419px;width:26px;height:4px;background:#8a8a8a;"></div>
<div class="a" style="left:908px;top:788px;width:1146px;height:68px;background:#181818;"></div>
<div class="a" style="left:908px;top:854px;width:1146px;height:2px;background:#2b2b2b;"></div>
<div class="a" style="left:908px;top:788px;width:365px;height:68px;background:#1f1f1f;"></div>
<div class="a" style="left:1271px;top:788px;width:2px;height:68px;background:#2b2b2b;"></div>
<svg class="a" style="left:938px;top:814px;" width="24" height="17" viewBox="0 0 24 17"><path d="M0.5 2.3H11.6M6.05 2.3V16.2" stroke="#519aba" stroke-width="2.5" fill="none"/><path d="M22.6 4.3C21.7 2.6 20.1 1.5 17.9 1.5C15.3 1.5 13.6 2.9 13.6 4.8C13.6 6.9 15.4 7.7 18 8.4C20.9 9.2 22.8 10.1 22.8 12.3C22.8 14.6 20.8 15.9 17.9 15.9C15.6 15.9 13.8 14.9 12.8 13.2" fill="none" stroke="#519aba" stroke-width="2.4"/></svg>
<div class="a ui" style="left:974px;top:788px;height:68px;line-height:68px;font-size:26px;color:#999999;letter-spacing:0.9px;font-weight:normal;font-style:normal;font-family:'Liberation Sans',sans-serif;">demo.component.ts</div>
<svg class="a" style="left:1234px;top:812px;" width="19" height="19" viewBox="0 0 19 19"><path d="M1 1L18 18M18 1L1 18" fill="none" stroke="#999999" stroke-width="2"/></svg>
<svg class="a" style="left:1995px;top:817px;" width="28.4" height="8" viewBox="0 0 28.4 8"><circle cx="4.0" cy="4" r="2.6" fill="#cccccc"/><circle cx="14.2" cy="4" r="2.6" fill="#cccccc"/><circle cx="24.4" cy="4" r="2.6" fill="#cccccc"/></svg>
<div class="a" style="left:942.5px;top:856px;height:44px;display:flex;align-items:center;white-space:pre"><span class="ui" style="font-size:26px;letter-spacing:0.9px;color:#a9a9a9;line-height:44px;position:relative;top:1px">src</span><svg style="margin:0 10.25px 0 11.25px;position:relative;top:0px" width="11" height="20" viewBox="0 0 11 20"><path d="M1.2 1.2L9.8 10L1.2 18.8" fill="none" stroke="#a9a9a9" stroke-width="2"/></svg><span class="ui" style="font-size:26px;letter-spacing:0.9px;color:#a9a9a9;line-height:44px;position:relative;top:1px">app</span><svg style="margin:0 10.25px 0 11.25px;position:relative;top:0px" width="11" height="20" viewBox="0 0 11 20"><path d="M1.2 1.2L9.8 10L1.2 18.8" fill="none" stroke="#a9a9a9" stroke-width="2"/></svg><span class="ui" style="font-size:26px;letter-spacing:0.9px;color:#a9a9a9;line-height:44px;position:relative;top:1px">demo</span><svg style="margin:0 10.25px 0 11.25px;position:relative;top:0px" width="11" height="20" viewBox="0 0 11 20"><path d="M1.2 1.2L9.8 10L1.2 18.8" fill="none" stroke="#a9a9a9" stroke-width="2"/></svg><svg style="margin-left:8px;margin-right:12px;position:relative;top:-3px" width="24" height="17" viewBox="0 0 24 17"><path d="M0.5 2.3H11.6M6.05 2.3V16.2" stroke="#519aba" stroke-width="2.5" fill="none"/><path d="M22.6 4.3C21.7 2.6 20.1 1.5 17.9 1.5C15.3 1.5 13.6 2.9 13.6 4.8C13.6 6.9 15.4 7.7 18 8.4C20.9 9.2 22.8 10.1 22.8 12.3C22.8 14.6 20.8 15.9 17.9 15.9C15.6 15.9 13.8 14.9 12.8 13.2" fill="none" stroke="#519aba" stroke-width="2.4"/></svg><span class="ui" style="font-size:26px;letter-spacing:0.9px;color:#a9a9a9;line-height:44px;position:relative;top:1px">demo.component.ts</span><svg style="margin:0 10.25px 0 11.25px;position:relative;top:0px" width="11" height="20" viewBox="0 0 11 20"><path d="M1.2 1.2L9.8 10L1.2 18.8" fill="none" stroke="#a9a9a9" stroke-width="2"/></svg><svg style="margin-left:-1px;margin-right:7px;position:relative;top:-1px" width="31" height="31" viewBox="0 0 16 16"><path fill="#ee9d28" d="M11.34 9.71h.71l2.67-2.67v-.71L13.38 5h-.7l-1.82 1.81h-5V5.56l1.86-1.85V3l-2-2H5L1 5v.71l2 2h.71l1.14-1.15v5.79l.5.5H10v.52l1.33 1.34h.71l2.67-2.67v-.71L13.37 10h-.7l-1.86 1.85h-5v-4H10v.48l1.34 1.38zm1.69-3.65l.63.63-2 2-.63-.63 2-2zm0 5l.63.63-2 2-.63-.63 2-2zM3.35 6.65l-1.29-1.3 3.29-3.29 1.3 1.29-3.3 3.3z"/></svg><span class="ui" style="font-size:26px;letter-spacing:0.9px;color:#a9a9a9;line-height:44px;position:relative;top:1px">DemoComponent</span></div>
<div class="a" style="left:908px;top:900px;width:984px;height:468px;overflow:hidden">
<div class="hl" style="left:135px;top:388px;width:849px;height:36px"></div>
<div class="ig" style="left:135.0px;top:-44px;height:144px"></div>
<div class="ig" style="left:135.0px;top:172px;height:216px"></div>
<div class="a ln" style="left:2px;top:-44px;width:80px">4</div>
<div class="a code" style="left:135px;top:-44px"><span style="color:#cccccc">@</span><span style="color:#4ec9b0">Component</span><span style="color:#ffd700">(</span><span style="color:#da70d6">{</span></div>
<div class="a ln" style="left:2px;top:-8px;width:80px">5</div>
<div class="a code" style="left:135px;top:-8px"><span style="color:#cccccc">  </span><span style="color:#9cdcfe">selector</span><span style="color:#cccccc">: </span><span style="color:#ce9178">'app-demo'</span><span style="color:#cccccc">,</span></div>
<div class="a ln" style="left:2px;top:28px;width:80px">6</div>
<div class="a code" style="left:135px;top:28px"><span style="color:#cccccc">  </span><span style="color:#9cdcfe">templateUrl</span><span style="color:#cccccc">: </span><span style="color:#ce9178">'./demo.component.html'</span><span style="color:#cccccc">,</span></div>
<div class="a ln" style="left:2px;top:64px;width:80px">7</div>
<div class="a code" style="left:135px;top:64px"><span style="color:#cccccc">  </span><span style="color:#9cdcfe">styleUrls</span><span style="color:#cccccc">: </span><span style="color:#179fff">[</span><span style="color:#ce9178">'./demo.component.css'</span><span style="color:#179fff">]</span></div>
<div class="a ln" style="left:2px;top:100px;width:80px">8</div>
<div class="a code" style="left:135px;top:100px"><span style="color:#da70d6">}</span><span style="color:#ffd700">)</span></div>
<div class="a ln" style="left:2px;top:136px;width:80px">9</div>
<div class="a code" style="left:135px;top:136px"><span style="color:#c586c0">export</span><span style="color:#cccccc"> </span><span style="color:#569cd6">class</span><span style="color:#cccccc"> </span><span style="color:#4ec9b0">DemoComponent</span><span style="color:#cccccc"> </span><span style="color:#569cd6">implements</span><span style="color:#cccccc"> </span><span style="color:#4ec9b0">OnInit</span><span style="color:#cccccc"> </span><span style="color:#ffd700">{</span></div>
<div class="a ln" style="left:2px;top:172px;width:80px">10</div>
<div class="a ln" style="left:2px;top:208px;width:80px">11</div>
<div class="a code" style="left:135px;top:208px"><span style="color:#cccccc">  </span><span style="color:#569cd6">constructor</span><span style="color:#da70d6">(</span><span style="color:#569cd6">public</span><span style="color:#cccccc"> </span><span style="color:#9cdcfe">testService</span><span style="color:#cccccc">: </span><span style="color:#4ec9b0">TestService</span><span style="color:#da70d6">)</span><span style="color:#cccccc"> </span><span style="color:#da70d6">{</span><span style="color:#cccccc"> </span><span style="color:#da70d6">}</span></div>
<div class="a ln" style="left:2px;top:244px;width:80px">12</div>
<div class="a ln" style="left:2px;top:280px;width:80px">13</div>
<div class="a code" style="left:135px;top:280px"><span style="color:#cccccc">  </span><span style="color:#dcdcaa">ngOnInit</span><span style="color:#da70d6">()</span><span style="color:#cccccc">: </span><span style="color:#4ec9b0">void</span><span style="color:#cccccc"> </span><span style="color:#da70d6">{</span></div>
<div class="a ln" style="left:2px;top:316px;width:80px">14</div>
<div class="a code" style="left:135px;top:316px"><span style="color:#cccccc">  </span><span style="color:#da70d6">}</span></div>
<div class="a ln" style="left:2px;top:352px;width:80px">15</div>
<div class="a ln cur" style="left:2px;top:388px;width:80px">16</div>
<div class="a code" style="left:135px;top:388px"><span style="color:#ffd700">}</span></div>
<div class="a ln" style="left:2px;top:424px;width:80px">17</div>
</div>
<div class="a" style="left:1900px;top:900px;width:130px;height:468px;overflow:hidden">
<div class="a" style="left:0px;top:1px;width:12px;height:3px;background:repeating-linear-gradient(90deg,#c586c0 0 1.4px,transparent 1.4px 2px);opacity:.5"></div>
<div class="a" style="left:14px;top:1px;width:2px;height:3px;background:repeating-linear-gradient(90deg,#ffd700 0 1.4px,transparent 1.4px 2px);opacity:.5"></div>
<div class="a" style="left:18px;top:1px;width:20px;height:3px;background:repeating-linear-gradient(90deg,#9cdcfe 0 1.4px,transparent 1.4px 2px);opacity:.5"></div>
<div class="a" style="left:40px;top:1px;width:12px;height:3px;background:repeating-linear-gradient(90deg,#9cdcfe 0 1.4px,transparent 1.4px 2px);opacity:.5"></div>
<div class="a" style="left:54px;top:1px;width:2px;height:3px;background:repeating-linear-gradient(90deg,#ffd700 0 1.4px,transparent 1.4px 2px);opacity:.5"></div>
<div class="a" style="left:58px;top:1px;width:8px;height:3px;background:repeating-linear-gradient(90deg,#c586c0 0 1.4px,transparent 1.4px 2px);opacity:.5"></div>
<div class="a" style="left:68px;top:1px;width:30px;height:3px;background:repeating-linear-gradient(90deg,#ce9178 0 1.4px,transparent 1.4px 2px);opacity:.5"></div>
<div class="a" style="left:98px;top:1px;width:2px;height:3px;background:repeating-linear-gradient(90deg,#cccccc 0 1.4px,transparent 1.4px 2px);opacity:.5"></div>
<div class="a" style="left:0px;top:5px;width:12px;height:3px;background:repeating-linear-gradient(90deg,#c586c0 0 1.4px,transparent 1.4px 2px);opacity:.5"></div>
<div class="a" style="left:14px;top:5px;width:2px;height:3px;background:repeating-linear-gradient(90deg,#ffd700 0 1.4px,transparent 1.4px 2px);opacity:.5"></div>
<div class="a" style="left:18px;top:5px;width:22px;height:3px;background:repeating-linear-gradient(90deg,#9cdcfe 0 1.4px,transparent 1.4px 2px);opacity:.5"></div>
<div class="a" style="left:42px;top:5px;width:2px;height:3px;background:repeating-linear-gradient(90deg,#ffd700 0 1.4px,transparent 1.4px 2px);opacity:.5"></div>
<div class="a" style="left:46px;top:5px;width:8px;height:3px;background:repeating-linear-gradient(90deg,#c586c0 0 1.4px,transparent 1.4px 2px);opacity:.5"></div>
<div class="a" style="left:56px;top:5px;width:34px;height:3px;background:repeating-linear-gradient(90deg,#ce9178 0 1.4px,transparent 1.4px 2px);opacity:.5"></div>
<div class="a" style="left:90px;top:5px;width:2px;height:3px;background:repeating-linear-gradient(90deg,#cccccc 0 1.4px,transparent 1.4px 2px);opacity:.5"></div>
<div class="a" style="left:0px;top:13px;width:2px;height:3px;background:repeating-linear-gradient(90deg,#cccccc 0 1.4px,transparent 1.4px 2px);opacity:.5"></div>
<div class="a" style="left:2px;top:13px;width:18px;height:3px;background:repeating-linear-gradient(90deg,#4ec9b0 0 1.4px,transparent 1.4px 2px);opacity:.5"></div>
<div class="a" style="left:20px;top:13px;width:2px;height:3px;background:repeating-linear-gradient(90deg,#ffd700 0 1.4px,transparent 1.4px 2px);opacity:.5"></div>
<div class="a" style="left:22px;top:13px;width:2px;height:3px;background:repeating-linear-gradient(90deg,#da70d6 0 1.4px,transparent 1.4px 2px);opacity:.5"></div>
<div class="a" style="left:4px;top:17px;width:16px;height:3px;background:repeating-linear-gradient(90deg,#9cdcfe 0 1.4px,transparent 1.4px 2px);opacity:.5"></div>
<div class="a" style="left:20px;top:17px;width:2px;height:3px;background:repeating-linear-gradient(90deg,#cccccc 0 1.4px,transparent 1.4px 2px);opacity:.5"></div>
<div class="a" style="left:24px;top:17px;width:20px;height:3px;background:repeating-linear-gradient(90deg,#ce9178 0 1.4px,transparent 1.4px 2px);opacity:.5"></div>
<div class="a" style="left:44px;top:17px;width:2px;height:3px;background:repeating-linear-gradient(90deg,#cccccc 0 1.4px,transparent 1.4px 2px);opacity:.5"></div>
<div class="a" style="left:4px;top:21px;width:22px;height:3px;background:repeating-linear-gradient(90deg,#9cdcfe 0 1.4px,transparent 1.4px 2px);opacity:.5"></div>
<div class="a" style="left:26px;top:21px;width:2px;height:3px;background:repeating-linear-gradient(90deg,#cccccc 0 1.4px,transparent 1.4px 2px);opacity:.5"></div>
<div class="a" style="left:30px;top:21px;width:46px;height:3px;background:repeating-linear-gradient(90deg,#ce9178 0 1.4px,transparent 1.4px 2px);opacity:.5"></div>
<div class="a" style="left:76px;top:21px;width:2px;height:3px;background:repeating-linear-gradient(90deg,#cccccc 0 1.4px,transparent 1.4px 2px);opacity:.5"></div>
<div class="a" style="left:4px;top:25px;width:18px;height:3px;background:repeating-linear-gradient(90deg,#9cdcfe 0 1.4px,transparent 1.4px 2px);opacity:.5"></div>
<div class="a" style="left:22px;top:25px;width:2px;height:3px;background:repeating-linear-gradient(90deg,#cccccc 0 1.4px,transparent 1.4px 2px);opacity:.5"></div>
<div class="a" style="left:26px;top:25px;width:2px;height:3px;background:repeating-linear-gradient(90deg,#179fff 0 1.4px,transparent 1.4px 2px);opacity:.5"></div>
<div class="a" style="left:28px;top:25px;width:44px;height:3px;background:repeating-linear-gradient(90deg,#ce9178 0 1.4px,transparent 1.4px 2px);opacity:.5"></div>
<div class="a" style="left:72px;top:25px;width:2px;height:3px;background:repeating-linear-gradient(90deg,#179fff 0 1.4px,transparent 1.4px 2px);opacity:.5"></div>
<div class="a" style="left:0px;top:29px;width:2px;height:3px;background:repeating-linear-gradient(90deg,#da70d6 0 1.4px,transparent 1.4px 2px);opacity:.5"></div>
<div class="a" style="left:2px;top:29px;width:2px;height:3px;background:repeating-linear-gradient(90deg,#ffd700 0 1.4px,transparent 1.4px 2px);opacity:.5"></div>
<div class="a" style="left:0px;top:33px;width:12px;height:3px;background:repeating-linear-gradient(90deg,#c586c0 0 1.4px,transparent 1.4px 2px);opacity:.5"></div>
<div class="a" style="left:14px;top:33px;width:10px;height:3px;background:repeating-linear-gradient(90deg,#569cd6 0 1.4px,transparent 1.4px 2px);opacity:.5"></div>
<div class="a" style="left:26px;top:33px;width:26px;height:3px;background:repeating-linear-gradient(90deg,#4ec9b0 0 1.4px,transparent 1.4px 2px);opacity:.5"></div>
<div class="a" style="left:54px;top:33px;width:20px;height:3px;background:repeating-linear-gradient(90deg,#569cd6 0 1.4px,transparent 1.4px 2px);opacity:.5"></div>
<div class="a" style="left:76px;top:33px;width:12px;height:3px;background:repeating-linear-gradient(90deg,#4ec9b0 0 1.4px,transparent 1.4px 2px);opacity:.5"></div>
<div class="a" style="left:90px;top:33px;width:2px;height:3px;background:repeating-linear-gradient(90deg,#ffd700 0 1.4px,transparent 1.4px 2px);opacity:.5"></div>
<div class="a" style="left:4px;top:41px;width:22px;height:3px;background:repeating-linear-gradient(90deg,#569cd6 0 1.4px,transparent 1.4px 2px);opacity:.5"></div>
<div class="a" style="left:26px;top:41px;width:2px;height:3px;background:repeating-linear-gradient(90deg,#da70d6 0 1.4px,transparent 1.4px 2px);opacity:.5"></div>
<div class="a" style="left:28px;top:41px;width:12px;height:3px;background:repeating-linear-gradient(90deg,#569cd6 0 1.4px,transparent 1.4px 2px);opacity:.5"></div>
<div class="a" style="left:42px;top:41px;width:22px;height:3px;background:repeating-linear-gradient(90deg,#9cdcfe 0 1.4px,transparent 1.4px 2px);opacity:.5"></div>
<div class="a" style="left:64px;top:41px;width:2px;height:3px;background:repeating-linear-gradient(90deg,#cccccc 0 1.4px,transparent 1.4px 2px);opacity:.5"></div>
<div class="a" style="left:68px;top:41px;width:22px;height:3px;background:repeating-linear-gradient(90deg,#4ec9b0 0 1.4px,transparent 1.4px 2px);opacity:.5"></div>
<div class="a" style="left:90px;top:41px;width:2px;height:3px;background:repeating-linear-gradient(90deg,#da70d6 0 1.4px,transparent 1.4px 2px);opacity:.5"></div>
<div class="a" style="left:94px;top:41px;width:2px;height:3px;background:repeating-linear-gradient(90deg,#da70d6 0 1.4px,transparent 1.4px 2px);opacity:.5"></div>
<div class="a" style="left:98px;top:41px;width:2px;height:3px;background:repeating-linear-gradient(90deg,#da70d6 0 1.4px,transparent 1.4px 2px);opacity:.5"></div>
<div class="a" style="left:4px;top:49px;width:16px;height:3px;background:repeating-linear-gradient(90deg,#dcdcaa 0 1.4px,transparent 1.4px 2px);opacity:.5"></div>
<div class="a" style="left:20px;top:49px;width:4px;height:3px;background:repeating-linear-gradient(90deg,#da70d6 0 1.4px,transparent 1.4px 2px);opacity:.5"></div>
<div class="a" style="left:24px;top:49px;width:2px;height:3px;background:repeating-linear-gradient(90deg,#cccccc 0 1.4px,transparent 1.4px 2px);opacity:.5"></div>
<div class="a" style="left:28px;top:49px;width:8px;height:3px;background:repeating-linear-gradient(90deg,#4ec9b0 0 1.4px,transparent 1.4px 2px);opacity:.5"></div>
<div class="a" style="left:38px;top:49px;width:2px;height:3px;background:repeating-linear-gradient(90deg,#da70d6 0 1.4px,transparent 1.4px 2px);opacity:.5"></div>
<div class="a" style="left:4px;top:53px;width:2px;height:3px;background:repeating-linear-gradient(90deg,#da70d6 0 1.4px,transparent 1.4px 2px);opacity:.5"></div>
<div class="a" style="left:0px;top:61px;width:2px;height:3px;background:repeating-linear-gradient(90deg,#ffd700 0 1.4px,transparent 1.4px 2px);opacity:.5"></div>
</div>
<div class="a" style="left:908px;top:900px;width:984px;height:8px;background:linear-gradient(rgba(0,0,0,.5),rgba(0,0,0,0))"></div>
<div class="a" style="left:2026px;top:900px;width:2px;height:468px;background:#161616;"></div>
<div class="a" style="left:2028px;top:1140px;width:26px;height:4px;background:#8a8a8a;"></div>
<div class="a" style="left:908px;top:1370px;width:1146px;height:68px;background:#181818;"></div>
<div class="a" style="left:908px;top:1436px;width:1146px;height:2px;background:#2b2b2b;"></div>
<div class="a" style="left:908px;top:1370px;width:293px;height:68px;background:#1f1f1f;"></div>
<div class="a" style="left:1199px;top:1370px;width:2px;height:68px;background:#2b2b2b;"></div>
<svg class="a" style="left:938px;top:1396px;" width="24" height="17" viewBox="0 0 24 17"><path d="M0.5 2.3H11.6M6.05 2.3V16.2" stroke="#519aba" stroke-width="2.5" fill="none"/><path d="M22.6 4.3C21.7 2.6 20.1 1.5 17.9 1.5C15.3 1.5 13.6 2.9 13.6 4.8C13.6 6.9 15.4 7.7 18 8.4C20.9 9.2 22.8 10.1 22.8 12.3C22.8 14.6 20.8 15.9 17.9 15.9C15.6 15.9 13.8 14.9 12.8 13.2" fill="none" stroke="#519aba" stroke-width="2.4"/></svg>
<div class="a ui" style="left:974px;top:1370px;height:68px;line-height:68px;font-size:26px;color:#999999;letter-spacing:0.9px;font-weight:normal;font-style:italic;font-family:'Liberation Sans',sans-serif;">test.service.ts</div>
<svg class="a" style="left:1163px;top:1394px;" width="19" height="19" viewBox="0 0 19 19"><path d="M1 1L18 18M18 1L1 18" fill="none" stroke="#999999" stroke-width="2"/></svg>
<svg class="a" style="left:1995px;top:1398px;" width="28.4" height="8" viewBox="0 0 28.4 8"><circle cx="4.0" cy="4" r="2.6" fill="#cccccc"/><circle cx="14.2" cy="4" r="2.6" fill="#cccccc"/><circle cx="24.4" cy="4" r="2.6" fill="#cccccc"/></svg>
<div class="a" style="left:942.5px;top:1438px;height:44px;display:flex;align-items:center;white-space:pre"><span class="ui" style="font-size:26px;letter-spacing:0.9px;color:#a9a9a9;line-height:44px;position:relative;top:1px">src</span><svg style="margin:0 10.25px 0 11.25px;position:relative;top:0px" width="11" height="20" viewBox="0 0 11 20"><path d="M1.2 1.2L9.8 10L1.2 18.8" fill="none" stroke="#a9a9a9" stroke-width="2"/></svg><span class="ui" style="font-size:26px;letter-spacing:0.9px;color:#a9a9a9;line-height:44px;position:relative;top:1px">app</span><svg style="margin:0 10.25px 0 11.25px;position:relative;top:0px" width="11" height="20" viewBox="0 0 11 20"><path d="M1.2 1.2L9.8 10L1.2 18.8" fill="none" stroke="#a9a9a9" stroke-width="2"/></svg><svg style="margin-left:8px;margin-right:12px;position:relative;top:-3px" width="24" height="17" viewBox="0 0 24 17"><path d="M0.5 2.3H11.6M6.05 2.3V16.2" stroke="#519aba" stroke-width="2.5" fill="none"/><path d="M22.6 4.3C21.7 2.6 20.1 1.5 17.9 1.5C15.3 1.5 13.6 2.9 13.6 4.8C13.6 6.9 15.4 7.7 18 8.4C20.9 9.2 22.8 10.1 22.8 12.3C22.8 14.6 20.8 15.9 17.9 15.9C15.6 15.9 13.8 14.9 12.8 13.2" fill="none" stroke="#519aba" stroke-width="2.4"/></svg><span class="ui" style="font-size:26px;letter-spacing:0.9px;color:#a9a9a9;line-height:44px;position:relative;top:1px">test.service.ts</span><svg style="margin:0 10.25px 0 11.25px;position:relative;top:0px" width="11" height="20" viewBox="0 0 11 20"><path d="M1.2 1.2L9.8 10L1.2 18.8" fill="none" stroke="#a9a9a9" stroke-width="2"/></svg><span class="ui" style="font-size:26px;color:#a9a9a9;line-height:44px;letter-spacing:1px;position:relative;top:1px">...</span></div>
<div class="a" style="left:908px;top:1482px;width:984px;height:378px;overflow:hidden">
<div class="hl" style="left:135px;top:0px;width:849px;height:36px"></div>
<div class="ig" style="left:135.0px;top:108px;height:36px"></div>
<div class="ig" style="left:135.0px;top:216px;height:144px"></div>
<div class="a ln cur" style="left:2px;top:0px;width:80px">1</div>
<div class="a code" style="left:135px;top:0px"><span style="color:#c586c0">import</span><span style="color:#cccccc"> </span><span style="color:#ffd700">{</span><span style="color:#cccccc"> </span><span style="color:#9cdcfe">Injectable</span><span style="color:#cccccc"> </span><span style="color:#ffd700">}</span><span style="color:#cccccc"> </span><span style="color:#c586c0">from</span><span style="color:#cccccc"> </span><span style="color:#ce9178">'@angular/core'</span><span style="color:#cccccc">;</span></div>
<div class="a ln" style="left:2px;top:36px;width:80px">2</div>
<div class="a ln" style="left:2px;top:72px;width:80px">3</div>
<div class="a code" style="left:135px;top:72px"><span style="color:#cccccc">@</span><span style="color:#4ec9b0">Injectable</span><span style="color:#ffd700">(</span><span style="color:#da70d6">{</span></div>
<div class="a ln" style="left:2px;top:108px;width:80px">4</div>
<div class="a code" style="left:135px;top:108px"><span style="color:#cccccc">  </span><span style="color:#9cdcfe">providedIn</span><span style="color:#cccccc">: </span><span style="color:#ce9178">'root'</span></div>
<div class="a ln" style="left:2px;top:144px;width:80px">5</div>
<div class="a code" style="left:135px;top:144px"><span style="color:#da70d6">}</span><span style="color:#ffd700">)</span></div>
<div class="a ln" style="left:2px;top:180px;width:80px">6</div>
<div class="a code" style="left:135px;top:180px"><span style="color:#c586c0">export</span><span style="color:#cccccc"> </span><span style="color:#569cd6">class</span><span style="color:#cccccc"> </span><span style="color:#4ec9b0">TestService</span><span style="color:#cccccc"> </span><span style="color:#ffd700">{</span></div>
<div class="a ln" style="left:2px;top:216px;width:80px">7</div>
<div class="a ln" style="left:2px;top:252px;width:80px">8</div>
<div class="a code" style="left:135px;top:252px"><span style="color:#cccccc">  </span><span style="color:#9cdcfe">test</span><span style="color:#cccccc">: </span><span style="color:#4ec9b0">string</span><span style="color:#cccccc"> = </span><span style="color:#ce9178">'test service'</span><span style="color:#cccccc">;</span></div>
<div class="a ln" style="left:2px;top:288px;width:80px">9</div>
<div class="a ln" style="left:2px;top:324px;width:80px">10</div>
<div class="a code" style="left:135px;top:324px"><span style="color:#cccccc">  </span><span style="color:#569cd6">constructor</span><span style="color:#da70d6">()</span><span style="color:#cccccc"> </span><span style="color:#da70d6">{</span><span style="color:#cccccc"> </span><span style="color:#da70d6">}</span></div>
<div class="a ln" style="left:2px;top:360px;width:80px">11</div>
<div class="a code" style="left:135px;top:360px"><span style="color:#ffd700">}</span></div>
<div class="a ln" style="left:2px;top:396px;width:80px">12</div>
</div>
<div class="a" style="left:1900px;top:1482px;width:130px;height:378px;overflow:hidden">
<div class="a" style="left:0px;top:1px;width:12px;height:3px;background:repeating-linear-gradient(90deg,#c586c0 0 1.4px,transparent 1.4px 2px);opacity:.5"></div>
<div class="a" style="left:14px;top:1px;width:2px;height:3px;background:repeating-linear-gradient(90deg,#ffd700 0 1.4px,transparent 1.4px 2px);opacity:.5"></div>
<div class="a" style="left:18px;top:1px;width:20px;height:3px;background:repeating-linear-gradient(90deg,#9cdcfe 0 1.4px,transparent 1.4px 2px);opacity:.5"></div>
<div class="a" style="left:40px;top:1px;width:2px;height:3px;background:repeating-linear-gradient(90deg,#ffd700 0 1.4px,transparent 1.4px 2px);opacity:.5"></div>
<div class="a" style="left:44px;top:1px;width:8px;height:3px;background:repeating-linear-gradient(90deg,#c586c0 0 1.4px,transparent 1.4px 2px);opacity:.5"></div>
<div class="a" style="left:54px;top:1px;width:30px;height:3px;background:repeating-linear-gradient(90deg,#ce9178 0 1.4px,transparent 1.4px 2px);opacity:.5"></div>
<div class="a" style="left:84px;top:1px;width:2px;height:3px;background:repeating-linear-gradient(90deg,#cccccc 0 1.4px,transparent 1.4px 2px);opacity:.5"></div>
<div class="a" style="left:0px;top:9px;width:2px;height:3px;background:repeating-linear-gradient(90deg,#cccccc 0 1.4px,transparent 1.4px 2px);opacity:.5"></div>
<div class="a" style="left:2px;top:9px;width:20px;height:3px;background:repeating-linear-gradient(90deg,#4ec9b0 0 1.4px,transparent 1.4px 2px);opacity:.5"></div>
<div class="a" style="left:22px;top:9px;width:2px;height:3px;background:repeating-linear-gradient(90deg,#ffd700 0 1.4px,transparent 1.4px 2px);opacity:.5"></div>
<div class="a" style="left:24px;top:9px;width:2px;height:3px;background:repeating-linear-gradient(90deg,#da70d6 0 1.4px,transparent 1.4px 2px);opacity:.5"></div>
<div class="a" style="left:4px;top:13px;width:20px;height:3px;background:repeating-linear-gradient(90deg,#9cdcfe 0 1.4px,transparent 1.4px 2px);opacity:.5"></div>
<div class="a" style="left:24px;top:13px;width:2px;height:3px;background:repeating-linear-gradient(90deg,#cccccc 0 1.4px,transparent 1.4px 2px);opacity:.5"></div>
<div class="a" style="left:28px;top:13px;width:12px;height:3px;background:repeating-linear-gradient(90deg,#ce9178 0 1.4px,transparent 1.4px 2px);opacity:.5"></div>
<div class="a" style="left:0px;top:17px;width:2px;height:3px;background:repeating-linear-gradient(90deg,#da70d6 0 1.4px,transparent 1.4px 2px);opacity:.5"></div>
<div class="a" style="left:2px;top:17px;width:2px;height:3px;background:repeating-linear-gradient(90deg,#ffd700 0 1.4px,transparent 1.4px 2px);opacity:.5"></div>
<div class="a" style="left:0px;top:21px;width:12px;height:3px;background:repeating-linear-gradient(90deg,#c586c0 0 1.4px,transparent 1.4px 2px);opacity:.5"></div>
<div class="a" style="left:14px;top:21px;width:10px;height:3px;background:repeating-linear-gradient(90deg,#569cd6 0 1.4px,transparent 1.4px 2px);opacity:.5"></div>
<div class="a" style="left:26px;top:21px;width:22px;height:3px;background:repeating-linear-gradient(90deg,#4ec9b0 0 1.4px,transparent 1.4px 2px);opacity:.5"></div>
<div class="a" style="left:50px;top:21px;width:2px;height:3px;background:repeating-linear-gradient(90deg,#ffd700 0 1.4px,transparent 1.4px 2px);opacity:.5"></div>
<div class="a" style="left:4px;top:29px;width:8px;height:3px;background:repeating-linear-gradient(90deg,#9cdcfe 0 1.4px,transparent 1.4px 2px);opacity:.5"></div>
<div class="a" style="left:12px;top:29px;width:2px;height:3px;background:repeating-linear-gradient(90deg,#cccccc 0 1.4px,transparent 1.4px 2px);opacity:.5"></div>
<div class="a" style="left:16px;top:29px;width:12px;height:3px;background:repeating-linear-gradient(90deg,#4ec9b0 0 1.4px,transparent 1.4px 2px);opacity:.5"></div>
<div class="a" style="left:30px;top:29px;width:2px;height:3px;background:repeating-linear-gradient(90deg,#cccccc 0 1.4px,transparent 1.4px 2px);opacity:.5"></div>
<div class="a" style="left:34px;top:29px;width:10px;height:3px;background:repeating-linear-gradient(90deg,#ce9178 0 1.4px,transparent 1.4px 2px);opacity:.5"></div>
<div class="a" style="left:46px;top:29px;width:16px;height:3px;background:repeating-linear-gradient(90deg,#ce9178 0 1.4px,transparent 1.4px 2px);opacity:.5"></div>
<div class="a" style="left:62px;top:29px;width:2px;height:3px;background:repeating-linear-gradient(90deg,#cccccc 0 1.4px,transparent 1.4px 2px);opacity:.5"></div>
<div class="a" style="left:4px;top:37px;width:22px;height:3px;background:repeating-linear-gradient(90deg,#569cd6 0 1.4px,transparent 1.4px 2px);opacity:.5"></div>
<div class="a" style="left:26px;top:37px;width:4px;height:3px;background:repeating-linear-gradient(90deg,#da70d6 0 1.4px,transparent 1.4px 2px);opacity:.5"></div>
<div class="a" style="left:32px;top:37px;width:2px;height:3px;background:repeating-linear-gradient(90deg,#da70d6 0 1.4px,transparent 1.4px 2px);opacity:.5"></div>
<div class="a" style="left:36px;top:37px;width:2px;height:3px;background:repeating-linear-gradient(90deg,#da70d6 0 1.4px,transparent 1.4px 2px);opacity:.5"></div>
<div class="a" style="left:0px;top:41px;width:2px;height:3px;background:repeating-linear-gradient(90deg,#ffd700 0 1.4px,transparent 1.4px 2px);opacity:.5"></div>
</div>
<div class="a" style="left:2026px;top:1482px;width:2px;height:378px;background:#161616;"></div>
<div class="a" style="left:2028px;top:1482px;width:26px;height:4px;background:#8a8a8a;"></div>
<div class="a" style="left:2056px;top:146px;width:1142px;height:70px;background:#181818;"></div>
<div class="a" style="left:2056px;top:214px;width:1142px;height:2px;background:#2b2b2b;"></div>
<div class="a" style="left:2056px;top:146px;width:291px;height:70px;background:#1f1f1f;"></div>
<div class="a" style="left:2345px;top:146px;width:2px;height:70px;background:#2b2b2b;"></div>
<svg class="a" style="left:2082px;top:172px;" width="24" height="17" viewBox="0 0 24 17"><path d="M0.5 2.3H11.6M6.05 2.3V16.2" stroke="#519aba" stroke-width="2.5" fill="none"/><path d="M22.6 4.3C21.7 2.6 20.1 1.5 17.9 1.5C15.3 1.5 13.6 2.9 13.6 4.8C13.6 6.9 15.4 7.7 18 8.4C20.9 9.2 22.8 10.1 22.8 12.3C22.8 14.6 20.8 15.9 17.9 15.9C15.6 15.9 13.8 14.9 12.8 13.2" fill="none" stroke="#519aba" stroke-width="2.4"/></svg>
<div class="a ui" style="left:2118px;top:146px;height:70px;line-height:70px;font-size:26px;color:#999999;letter-spacing:0.9px;font-weight:normal;font-style:normal;font-family:'Liberation Sans',sans-serif;">app.module.ts</div>
<div class="a" style="left:2310px;top:173px;width:17px;height:17px;border-radius:9px;background:#999999"></div>
<svg class="a" style="left:3140px;top:177px;" width="28.4" height="8" viewBox="0 0 28.4 8"><circle cx="4.0" cy="4" r="2.6" fill="#cccccc"/><circle cx="14.2" cy="4" r="2.6" fill="#cccccc"/><circle cx="24.4" cy="4" r="2.6" fill="#cccccc"/></svg>
<div class="a" style="left:2086.5px;top:216px;height:44px;display:flex;align-items:center;white-space:pre"><span class="ui" style="font-size:26px;letter-spacing:0.9px;color:#a9a9a9;line-height:44px;position:relative;top:1px">src</span><svg style="margin:0 10.25px 0 11.25px;position:relative;top:0px" width="11" height="20" viewBox="0 0 11 20"><path d="M1.2 1.2L9.8 10L1.2 18.8" fill="none" stroke="#a9a9a9" stroke-width="2"/></svg><span class="ui" style="font-size:26px;letter-spacing:0.9px;color:#a9a9a9;line-height:44px;position:relative;top:1px">app</span><svg style="margin:0 10.25px 0 11.25px;position:relative;top:0px" width="11" height="20" viewBox="0 0 11 20"><path d="M1.2 1.2L9.8 10L1.2 18.8" fill="none" stroke="#a9a9a9" stroke-width="2"/></svg><svg style="margin-left:8px;margin-right:12px;position:relative;top:-3px" width="24" height="17" viewBox="0 0 24 17"><path d="M0.5 2.3H11.6M6.05 2.3V16.2" stroke="#519aba" stroke-width="2.5" fill="none"/><path d="M22.6 4.3C21.7 2.6 20.1 1.5 17.9 1.5C15.3 1.5 13.6 2.9 13.6 4.8C13.6 6.9 15.4 7.7 18 8.4C20.9 9.2 22.8 10.1 22.8 12.3C22.8 14.6 20.8 15.9 17.9 15.9C15.6 15.9 13.8 14.9 12.8 13.2" fill="none" stroke="#519aba" stroke-width="2.4"/></svg><span class="ui" style="font-size:26px;letter-spacing:0.9px;color:#a9a9a9;line-height:44px;position:relative;top:1px">app.module.ts</span><svg style="margin:0 10.25px 0 11.25px;position:relative;top:0px" width="11" height="20" viewBox="0 0 11 20"><path d="M1.2 1.2L9.8 10L1.2 18.8" fill="none" stroke="#a9a9a9" stroke-width="2"/></svg><svg style="margin-left:-1px;margin-right:7px;position:relative;top:-1px" width="31" height="31" viewBox="0 0 16 16"><path fill="#ee9d28" d="M11.34 9.71h.71l2.67-2.67v-.71L13.38 5h-.7l-1.82 1.81h-5V5.56l1.86-1.85V3l-2-2H5L1 5v.71l2 2h.71l1.14-1.15v5.79l.5.5H10v.52l1.33 1.34h.71l2.67-2.67v-.71L13.37 10h-.7l-1.86 1.85h-5v-4H10v.48l1.34 1.38zm1.69-3.65l.63.63-2 2-.63-.63 2-2zm0 5l.63.63-2 2-.63-.63 2-2zM3.35 6.65l-1.29-1.3 3.29-3.29 1.3 1.29-3.3 3.3z"/></svg><span class="ui" style="font-size:26px;letter-spacing:0.9px;color:#a9a9a9;line-height:44px;position:relative;top:1px">AppModule</span></div>
<div class="a" style="left:2056px;top:260px;width:982px;height:744px;overflow:hidden">
<div class="hl" style="left:131px;top:259px;width:851px;height:36px"></div>
<div class="ig" style="left:131.0px;top:-29px;height:576px"></div>
<div class="ig" style="left:159.8px;top:115px;height:180px"></div>
<div class="a ln" style="left:-2px;top:-29px;width:80px">23</div>
<div class="a ln" style="left:-2px;top:7px;width:80px">24</div>
<div class="a ln" style="left:-2px;top:43px;width:80px">25</div>
<div class="a code" style="left:131px;top:43px"><span style="color:#cccccc">  </span><span style="color:#6a9955">//<span class="cj"><svg viewBox="0 0 22 22"><use href="#g0"/></svg></span><span class="cj"><svg viewBox="0 0 22 22"><use href="#g2"/></svg></span><span class="cj"><svg viewBox="0 0 22 22"><use href="#g5"/></svg></span><span class="cj"><svg viewBox="0 0 22 22"><use href="#g3"/></svg></span><span class="cj"><svg viewBox="0 0 22 22"><use href="#g7"/></svg></span><span class="cj"><svg viewBox="0 0 22 22"><use href="#g1"/></svg></span><span class="cj"><svg viewBox="0 0 22 22"><use href="#g3"/></svg></span><span class="cj"><svg viewBox="0 0 22 22"><use href="#g2"/></svg></span><span class="cj"><svg viewBox="0 0 22 22"><use href="#g2"/></svg></span><span class="cj"><svg viewBox="0 0 22 22"><use href="#g6"/></svg></span><span class="cj"><svg viewBox="0 0 22 22"><use href="#g5"/></svg></span><span class="cj"><svg viewBox="0 0 22 22"><use href="#g2"/></svg></span><span class="cj"><svg viewBox="0 0 22 22"><use href="#g2"/></svg></span><span class="cj"><svg viewBox="0 0 22 22"><use href="#g7"/></svg></span><span class="cj"><svg viewBox="0 0 22 22"><use href="#g1"/></svg></span></span></div>
<div class="a ln" style="left:-2px;top:79px;width:80px">26</div>
<div class="a code" style="left:131px;top:79px"><span style="color:#cccccc">  </span><span style="color:#9cdcfe">imports</span><span style="color:#cccccc">: </span><span style="color:#179fff">[</span></div>
<div class="a ln" style="left:-2px;top:115px;width:80px">27</div>
<div class="a code" style="left:131px;top:115px"><span style="color:#cccccc">    </span><span style="color:#4ec9b0">BrowserModule</span><span style="color:#cccccc">,</span></div>
<div class="a ln" style="left:-2px;top:151px;width:80px">28</div>
<div class="a code" style="left:131px;top:151px"><span style="color:#cccccc">    </span><span style="color:#4ec9b0">AppRoutingModule</span><span style="color:#cccccc">,</span></div>
<div class="a ln" style="left:-2px;top:187px;width:80px">29</div>
<div class="a code" style="left:131px;top:187px"><span style="color:#cccccc">    </span><span style="color:#4ec9b0">SharedModule</span><span style="color:#cccccc">,</span></div>
<div class="a ln" style="left:-2px;top:223px;width:80px">30</div>
<div class="a code" style="left:131px;top:223px"><span style="color:#cccccc">    </span><span style="color:#4ec9b0">FormsModule</span><span style="color:#cccccc">,</span></div>
<div class="a ln cur" style="left:-2px;top:259px;width:80px">31</div>
<div class="a code" style="left:131px;top:259px"><span style="color:#cccccc">    </span><span style="color:#4ec9b0">DemoModule</span><span style="color:#cccccc"> </span><span style="color:#6a9955">// <span class="cj"><svg viewBox="0 0 22 22"><use href="#g3"/></svg></span><span class="cj"><svg viewBox="0 0 22 22"><use href="#g3"/></svg></span>DemoModule</span></div>
<div class="a ln" style="left:-2px;top:295px;width:80px">32</div>
<div class="a code" style="left:131px;top:295px"><span style="color:#cccccc">  </span><span style="color:#179fff">]</span><span style="color:#cccccc">,</span></div>
<div class="a ln" style="left:-2px;top:331px;width:80px">33</div>
<div class="a ln" style="left:-2px;top:367px;width:80px">34</div>
<div class="a code" style="left:131px;top:367px"><span style="color:#cccccc">  </span><span style="color:#6a9955">// <span class="cj"><svg viewBox="0 0 22 22"><use href="#g0"/></svg></span><span class="cj"><svg viewBox="0 0 22 22"><use href="#g2"/></svg></span><span class="cj"><svg viewBox="0 0 22 22"><use href="#g3"/></svg></span><span class="cj"><svg viewBox="0 0 22 22"><use href="#g7"/></svg></span><span class="cj"><svg viewBox="0 0 22 22"><use href="#g4"/></svg></span><span class="cj"><svg viewBox="0 0 22 22"><use href="#g4"/></svg></span><span class="cj"><svg viewBox="0 0 22 22"><use href="#g0"/></svg></span><span class="cj"><svg viewBox="0 0 22 22"><use href="#g1"/></svg></span><span class="cj"><svg viewBox="0 0 22 22"><use href="#gc"/></svg></span><span class="cj"><svg viewBox="0 0 22 22"><use href="#g0"/></svg></span><span class="cj"><svg viewBox="0 0 22 22"><use href="#g4"/></svg></span><span class="cj"><svg viewBox="0 0 22 22"><use href="#g3"/></svg></span><span class="cj"><svg viewBox="0 0 22 22"><use href="#g3"/></svg></span><span class="cj"><svg viewBox="0 0 22 22"><use href="#g2"/></svg></span><span class="cj"><svg viewBox="0 0 22 22"><use href="#g3"/></svg></span><span class="cj"><svg viewBox="0 0 22 22"><use href="#g7"/></svg></span><span class="cj"><svg viewBox="0 0 22 22"><use href="#g5"/></svg></span><span class="cj"><svg viewBox="0 0 22 22"><use href="#gc"/></svg></span><span class="cj"><svg viewBox="0 0 22 22"><use href="#g0"/></svg></span><span class="cj"><svg viewBox="0 0 22 22"><use href="#g6"/></svg></span><span class="cj"><svg viewBox="0 0 22 22"><use href="#g3"/></svg></span><span class="cj"><svg viewBox="0 0 22 22"><use href="#g3"/></svg></span><span class="cj"><svg viewBox="0 0 22 22"><use href="#g7"/></svg></span><span class="cj"><svg viewBox="0 0 22 22"><use href="#g6"/></svg></span><span class="cj"><svg viewBox="0 0 22 22"><use href="#g3"/></svg></span><span class="cj"><svg viewBox="0 0 22 22"><use href="#g0"/></svg></span><span class="cj"><svg viewBox="0 0 22 22"><use href="#g5"/></svg></span><span class="cj"><svg viewBox="0 0 22 22"><use href="#g3"/></svg></span><span class="cj"><svg viewBox="0 0 22 22"><use href="#g7"/></svg></span><span class="cj"><svg viewBox="0 0 22 22"><use href="#g1"/></svg></span><span class="cj"><svg viewBox="0 0 22 22"><use href="#g4"/></svg></span><span class="cj"><svg viewBox="0 0 22 22"><use href="#g4"/></svg></span><span class="cj"><svg viewBox="0 0 22 22"><use href="#g2"/></svg></span><span class="cj"><svg viewBox="0 0 22 22"><use href="#g3"/></svg></span><span class="cj"><svg viewBox="0 0 22 22"><use href="#g1"/></svg></span><span class="cj"><svg viewBox="0 0 22 22"><use href="#g0"/></svg></span></span></div>
<div class="a ln" style="left:-2px;top:403px;width:80px">35</div>
<div class="a code" style="left:131px;top:403px"><span style="color:#cccccc">  </span><span style="color:#9cdcfe">providers</span><span style="color:#cccccc">: </span><span style="color:#179fff">[]</span><span style="color:#cccccc">,</span></div>
<div class="a ln" style="left:-2px;top:439px;width:80px">36</div>
<div class="a ln" style="left:-2px;top:475px;width:80px">37</div>
<div class="a code" style="left:131px;top:475px"><span style="color:#cccccc">  </span><span style="color:#6a9955">// <span class="cj"><svg viewBox="0 0 22 22"><use href="#g1"/></svg></span><span class="cj"><svg viewBox="0 0 22 22"><use href="#g3"/></svg></span><span class="cj"><svg viewBox="0 0 22 22"><use href="#g4"/></svg></span><span class="cj"><svg viewBox="0 0 22 22"><use href="#g4"/></svg></span><span class="cj"><svg viewBox="0 0 22 22"><use href="#g2"/></svg></span><span class="cj"><svg viewBox="0 0 22 22"><use href="#gc"/></svg></span>Angular <span class="cj"><svg viewBox="0 0 22 22"><use href="#g6"/></svg></span><span class="cj"><svg viewBox="0 0 22 22"><use href="#g0"/></svg></span><span class="cj"><svg viewBox="0 0 22 22"><use href="#g3"/></svg></span><span class="cj"><svg viewBox="0 0 22 22"><use href="#g4"/></svg></span><span class="cj"><svg viewBox="0 0 22 22"><use href="#g1"/></svg></span><span class="cj"><svg viewBox="0 0 22 22"><use href="#g5"/></svg></span><span class="cj"><svg viewBox="0 0 22 22"><use href="#g3"/></svg></span><span class="cj"><svg viewBox="0 0 22 22"><use href="#g6"/></svg></span><span class="cj"><svg viewBox="0 0 22 22"><use href="#g5"/></svg></span><span class="cj"><svg viewBox="0 0 22 22"><use href="#g0"/></svg></span><span class="cj"><svg viewBox="0 0 22 22"><use href="#g3"/></svg></span><span class="cj"><svg viewBox="0 0 22 22"><use href="#g0"/></svg></span>DOM<span class="cj"><svg viewBox="0 0 22 22"><use href="#g3"/></svg></span></span></div>
<div class="a ln" style="left:-2px;top:511px;width:80px">38</div>
<div class="a code" style="left:131px;top:511px"><span style="color:#cccccc">  </span><span style="color:#9cdcfe">bootstrap</span><span style="color:#cccccc">: </span><span style="color:#179fff">[</span><span style="color:#4ec9b0">AppComponent</span><span style="color:#179fff">]</span></div>
<div class="a ln" style="left:-2px;top:547px;width:80px">39</div>
<div class="a code" style="left:131px;top:547px"><span style="color:#da70d6">}</span><span style="color:#ffd700">)</span></div>
<div class="a ln" style="left:-2px;top:583px;width:80px">40</div>
<div class="a code" style="left:131px;top:583px"><span style="color:#c586c0">export</span><span style="color:#cccccc"> </span><span style="color:#569cd6">class</span><span style="color:#cccccc"> </span><span style="color:#4ec9b0">AppModule</span><span style="color:#cccccc"> </span><span style="color:#ffd700">{</span><span style="color:#cccccc"> </span><span style="color:#ffd700">}</span></div>
<div class="a ln" style="left:-2px;top:619px;width:80px">41</div>
<div class="a ln" style="left:-2px;top:655px;width:80px">42</div>
</div>
<div class="a" style="left:3046px;top:260px;width:130px;height:744px;overflow:hidden">
<div class="a" style="left:0px;top:1px;width:12px;height:3px;background:repeating-linear-gradient(90deg,#c586c0 0 1.4px,transparent 1.4px 2px);opacity:.5"></div>
<div class="a" style="left:14px;top:1px;width:2px;height:3px;background:repeating-linear-gradient(90deg,#ffd700 0 1.4px,transparent 1.4px 2px);opacity:.5"></div>
<div class="a" style="left:18px;top:1px;width:18px;height:3px;background:repeating-linear-gradient(90deg,#9cdcfe 0 1.4px,transparent 1.4px 2px);opacity:.5"></div>
<div class="a" style="left:38px;top:1px;width:22px;height:3px;background:repeating-linear-gradient(90deg,#9cdcfe 0 1.4px,transparent 1.4px 2px);opacity:.5"></div>
<div class="a" style="left:62px;top:1px;width:2px;height:3px;background:repeating-linear-gradient(90deg,#ffd700 0 1.4px,transparent 1.4px 2px);opacity:.5"></div>
<div class="a" style="left:66px;top:1px;width:8px;height:3px;background:repeating-linear-gradient(90deg,#c586c0 0 1.4px,transparent 1.4px 2px);opacity:.5"></div>
<div class="a" style="left:76px;top:1px;width:30px;height:3px;background:repeating-linear-gradient(90deg,#ce9178 0 1.4px,transparent 1.4px 2px);opacity:.5"></div>
<div class="a" style="left:106px;top:1px;width:2px;height:3px;background:repeating-linear-gradient(90deg,#cccccc 0 1.4px,transparent 1.4px 2px);opacity:.5"></div>
<div class="a" style="left:0px;top:5px;width:12px;height:3px;background:repeating-linear-gradient(90deg,#c586c0 0 1.4px,transparent 1.4px 2px);opacity:.5"></div>
<div class="a" style="left:14px;top:5px;width:2px;height:3px;background:repeating-linear-gradient(90deg,#ffd700 0 1.4px,transparent 1.4px 2px);opacity:.5"></div>
<div class="a" style="left:18px;top:5px;width:26px;height:3px;background:repeating-linear-gradient(90deg,#9cdcfe 0 1.4px,transparent 1.4px 2px);opacity:.5"></div>
<div class="a" style="left:46px;top:5px;width:2px;height:3px;background:repeating-linear-gradient(90deg,#ffd700 0 1.4px,transparent 1.4px 2px);opacity:.5"></div>
<div class="a" style="left:50px;top:5px;width:8px;height:3px;background:repeating-linear-gradient(90deg,#c586c0 0 1.4px,transparent 1.4px 2px);opacity:.5"></div>
<div class="a" style="left:60px;top:5px;width:54px;height:3px;background:repeating-linear-gradient(90deg,#ce9178 0 1.4px,transparent 1.4px 2px);opacity:.5"></div>
<div class="a" style="left:114px;top:5px;width:2px;height:3px;background:repeating-linear-gradient(90deg,#cccccc 0 1.4px,transparent 1.4px 2px);opacity:.5"></div>
<div class="a" style="left:0px;top:13px;width:12px;height:3px;background:repeating-linear-gradient(90deg,#c586c0 0 1.4px,transparent 1.4px 2px);opacity:.5"></div>
<div class="a" style="left:14px;top:13px;width:2px;height:3px;background:repeating-linear-gradient(90deg,#ffd700 0 1.4px,transparent 1.4px 2px);opacity:.5"></div>
<div class="a" style="left:18px;top:13px;width:32px;height:3px;background:repeating-linear-gradient(90deg,#9cdcfe 0 1.4px,transparent 1.4px 2px);opacity:.5"></div>
<div class="a" style="left:52px;top:13px;width:2px;height:3px;background:repeating-linear-gradient(90deg,#ffd700 0 1.4px,transparent 1.4px 2px);opacity:.5"></div>
<div class="a" style="left:56px;top:13px;width:8px;height:3px;background:repeating-linear-gradient(90deg,#c586c0 0 1.4px,transparent 1.4px 2px);opacity:.5"></div>
<div class="a" style="left:66px;top:13px;width:44px;height:3px;background:repeating-linear-gradient(90deg,#ce9178 0 1.4px,transparent 1.4px 2px);opacity:.5"></div>
<div class="a" style="left:110px;top:13px;width:2px;height:3px;background:repeating-linear-gradient(90deg,#cccccc 0 1.4px,transparent 1.4px 2px);opacity:.5"></div>
<div class="a" style="left:0px;top:17px;width:12px;height:3px;background:repeating-linear-gradient(90deg,#c586c0 0 1.4px,transparent 1.4px 2px);opacity:.5"></div>
<div class="a" style="left:14px;top:17px;width:2px;height:3px;background:repeating-linear-gradient(90deg,#ffd700 0 1.4px,transparent 1.4px 2px);opacity:.5"></div>
<div class="a" style="left:18px;top:17px;width:24px;height:3px;background:repeating-linear-gradient(90deg,#9cdcfe 0 1.4px,transparent 1.4px 2px);opacity:.5"></div>
<div class="a" style="left:44px;top:17px;width:2px;height:3px;background:repeating-linear-gradient(90deg,#ffd700 0 1.4px,transparent 1.4px 2px);opacity:.5"></div>
<div class="a" style="left:48px;top:17px;width:8px;height:3px;background:repeating-linear-gradient(90deg,#c586c0 0 1.4px,transparent 1.4px 2px);opacity:.5"></div>
<div class="a" style="left:58px;top:17px;width:34px;height:3px;background:repeating-linear-gradient(90deg,#ce9178 0 1.4px,transparent 1.4px 2px);opacity:.5"></div>
<div class="a" style="left:92px;top:17px;width:2px;height:3px;background:repeating-linear-gradient(90deg,#cccccc 0 1.4px,transparent 1.4px 2px);opacity:.5"></div>
<div class="a" style="left:0px;top:21px;width:12px;height:3px;background:repeating-linear-gradient(90deg,#c586c0 0 1.4px,transparent 1.4px 2px);opacity:.5"></div>
<div class="a" style="left:14px;top:21px;width:2px;height:3px;background:repeating-linear-gradient(90deg,#ffd700 0 1.4px,transparent 1.4px 2px);opacity:.5"></div>
<div class="a" style="left:18px;top:21px;width:24px;height:3px;background:repeating-linear-gradient(90deg,#9cdcfe 0 1.4px,transparent 1.4px 2px);opacity:.5"></div>
<div class="a" style="left:44px;top:21px;width:2px;height:3px;background:repeating-linear-gradient(90deg,#ffd700 0 1.4px,transparent 1.4px 2px);opacity:.5"></div>
<div class="a" style="left:48px;top:21px;width:8px;height:3px;background:repeating-linear-gradient(90deg,#c586c0 0 1.4px,transparent 1.4px 2px);opacity:.5"></div>
<div class="a" style="left:58px;top:21px;width:48px;height:3px;background:repeating-linear-gradient(90deg,#ce9178 0 1.4px,transparent 1.4px 2px);opacity:.5"></div>
<div class="a" style="left:106px;top:21px;width:2px;height:3px;background:repeating-linear-gradient(90deg,#cccccc 0 1.4px,transparent 1.4px 2px);opacity:.5"></div>
<div class="a" style="left:0px;top:25px;width:12px;height:3px;background:repeating-linear-gradient(90deg,#c586c0 0 1.4px,transparent 1.4px 2px);opacity:.5"></div>
<div class="a" style="left:14px;top:25px;width:2px;height:3px;background:repeating-linear-gradient(90deg,#ffd700 0 1.4px,transparent 1.4px 2px);opacity:.5"></div>
<div class="a" style="left:18px;top:25px;width:22px;height:3px;background:repeating-linear-gradient(90deg,#9cdcfe 0 1.4px,transparent 1.4px 2px);opacity:.5"></div>
<div class="a" style="left:42px;top:25px;width:2px;height:3px;background:repeating-linear-gradient(90deg,#ffd700 0 1.4px,transparent 1.4px 2px);opacity:.5"></div>
<div class="a" style="left:46px;top:25px;width:8px;height:3px;background:repeating-linear-gradient(90deg,#c586c0 0 1.4px,transparent 1.4px 2px);opacity:.5"></div>
<div class="a" style="left:56px;top:25px;width:32px;height:3px;background:repeating-linear-gradient(90deg,#ce9178 0 1.4px,transparent 1.4px 2px);opacity:.5"></div>
<div class="a" style="left:88px;top:25px;width:2px;height:3px;background:repeating-linear-gradient(90deg,#cccccc 0 1.4px,transparent 1.4px 2px);opacity:.5"></div>
<div class="a" style="left:0px;top:29px;width:12px;height:3px;background:repeating-linear-gradient(90deg,#c586c0 0 1.4px,transparent 1.4px 2px);opacity:.5"></div>
<div class="a" style="left:14px;top:29px;width:2px;height:3px;background:repeating-linear-gradient(90deg,#ffd700 0 1.4px,transparent 1.4px 2px);opacity:.5"></div>
<div class="a" style="left:18px;top:29px;width:28px;height:3px;background:repeating-linear-gradient(90deg,#9cdcfe 0 1.4px,transparent 1.4px 2px);opacity:.5"></div>
<div class="a" style="left:48px;top:29px;width:2px;height:3px;background:repeating-linear-gradient(90deg,#ffd700 0 1.4px,transparent 1.4px 2px);opacity:.5"></div>
<div class="a" style="left:52px;top:29px;width:8px;height:3px;background:repeating-linear-gradient(90deg,#c586c0 0 1.4px,transparent 1.4px 2px);opacity:.5"></div>
<div class="a" style="left:62px;top:29px;width:60px;height:3px;background:repeating-linear-gradient(90deg,#ce9178 0 1.4px,transparent 1.4px 2px);opacity:.5"></div>
<div class="a" style="left:122px;top:29px;width:2px;height:3px;background:repeating-linear-gradient(90deg,#cccccc 0 1.4px,transparent 1.4px 2px);opacity:.5"></div>
<div class="a" style="left:0px;top:33px;width:12px;height:3px;background:repeating-linear-gradient(90deg,#c586c0 0 1.4px,transparent 1.4px 2px);opacity:.5"></div>
<div class="a" style="left:14px;top:33px;width:2px;height:3px;background:repeating-linear-gradient(90deg,#ffd700 0 1.4px,transparent 1.4px 2px);opacity:.5"></div>
<div class="a" style="left:18px;top:33px;width:30px;height:3px;background:repeating-linear-gradient(90deg,#9cdcfe 0 1.4px,transparent 1.4px 2px);opacity:.5"></div>
<div class="a" style="left:50px;top:33px;width:2px;height:3px;background:repeating-linear-gradient(90deg,#ffd700 0 1.4px,transparent 1.4px 2px);opacity:.5"></div>
<div class="a" style="left:54px;top:33px;width:8px;height:3px;background:repeating-linear-gradient(90deg,#c586c0 0 1.4px,transparent 1.4px 2px);opacity:.5"></div>
<div class="a" style="left:64px;top:33px;width:76px;height:3px;background:repeating-linear-gradient(90deg,#ce9178 0 1.4px,transparent 1.4px 2px);opacity:.5"></div>
<div class="a" style="left:140px;top:33px;width:2px;height:3px;background:repeating-linear-gradient(90deg,#cccccc 0 1.4px,transparent 1.4px 2px);opacity:.5"></div>
<div class="a" style="left:0px;top:37px;width:12px;height:3px;background:repeating-linear-gradient(90deg,#c586c0 0 1.4px,transparent 1.4px 2px);opacity:.5"></div>
<div class="a" style="left:14px;top:37px;width:2px;height:3px;background:repeating-linear-gradient(90deg,#ffd700 0 1.4px,transparent 1.4px 2px);opacity:.5"></div>
<div class="a" style="left:18px;top:37px;width:28px;height:3px;background:repeating-linear-gradient(90deg,#9cdcfe 0 1.4px,transparent 1.4px 2px);opacity:.5"></div>
<div class="a" style="left:48px;top:37px;width:2px;height:3px;background:repeating-linear-gradient(90deg,#ffd700 0 1.4px,transparent 1.4px 2px);opacity:.5"></div>
<div class="a" style="left:52px;top:37px;width:8px;height:3px;background:repeating-linear-gradient(90deg,#c586c0 0 1.4px,transparent 1.4px 2px);opacity:.5"></div>
<div class="a" style="left:62px;top:37px;width:50px;height:3px;background:repeating-linear-gradient(90deg,#ce9178 0 1.4px,transparent 1.4px 2px);opacity:.5"></div>
<div class="a" style="left:112px;top:37px;width:2px;height:3px;background:repeating-linear-gradient(90deg,#cccccc 0 1.4px,transparent 1.4px 2px);opacity:.5"></div>
<div class="a" style="left:0px;top:41px;width:12px;height:3px;background:repeating-linear-gradient(90deg,#c586c0 0 1.4px,transparent 1.4px 2px);opacity:.5"></div>
<div class="a" style="left:14px;top:41px;width:2px;height:3px;background:repeating-linear-gradient(90deg,#ffd700 0 1.4px,transparent 1.4px 2px);opacity:.5"></div>
<div class="a" style="left:18px;top:41px;width:26px;height:3px;background:repeating-linear-gradient(90deg,#9cdcfe 0 1.4px,transparent 1.4px 2px);opacity:.5"></div>
<div class="a" style="left:46px;top:41px;width:2px;height:3px;background:repeating-linear-gradient(90deg,#ffd700 0 1.4px,transparent 1.4px 2px);opacity:.5"></div>
<div class="a" style="left:50px;top:41px;width:8px;height:3px;background:repeating-linear-gradient(90deg,#c586c0 0 1.4px,transparent 1.4px 2px);opacity:.5"></div>
<div class="a" style="left:60px;top:41px;width:46px;height:3px;background:repeating-linear-gradient(90deg,#ce9178 0 1.4px,transparent 1.4px 2px);opacity:.5"></div>
<div class="a" style="left:106px;top:41px;width:2px;height:3px;background:repeating-linear-gradient(90deg,#cccccc 0 1.4px,transparent 1.4px 2px);opacity:.5"></div>
<div class="a" style="left:0px;top:45px;width:12px;height:3px;background:repeating-linear-gradient(90deg,#c586c0 0 1.4px,transparent 1.4px 2px);opacity:.5"></div>
<div class="a" style="left:14px;top:45px;width:2px;height:3px;background:repeating-linear-gradient(90deg,#ffd700 0 1.4px,transparent 1.4px 2px);opacity:.5"></div>
<div class="a" style="left:18px;top:45px;width:20px;height:3px;background:repeating-linear-gradient(90deg,#9cdcfe 0 1.4px,transparent 1.4px 2px);opacity:.5"></div>
<div class="a" style="left:40px;top:45px;width:2px;height:3px;background:repeating-linear-gradient(90deg,#ffd700 0 1.4px,transparent 1.4px 2px);opacity:.5"></div>
<div class="a" style="left:44px;top:45px;width:8px;height:3px;background:repeating-linear-gradient(90deg,#c586c0 0 1.4px,transparent 1.4px 2px);opacity:.5"></div>
<div class="a" style="left:54px;top:45px;width:40px;height:3px;background:repeating-linear-gradient(90deg,#ce9178 0 1.4px,transparent 1.4px 2px);opacity:.5"></div>
<div class="a" style="left:94px;top:45px;width:2px;height:3px;background:repeating-linear-gradient(90deg,#cccccc 0 1.4px,transparent 1.4px 2px);opacity:.5"></div>
<div class="a" style="left:0px;top:53px;width:4px;height:3px;background:repeating-linear-gradient(90deg,#6a9955 0 1.4px,transparent 1.4px 2px);opacity:.5"></div>
<div class="a" style="left:6px;top:53px;width:68px;height:3px;background:repeating-linear-gradient(90deg,#6a9955 0 1.4px,transparent 1.4px 2px);opacity:.5"></div>
<div class="a" style="left:76px;top:53px;width:62px;height:3px;background:repeating-linear-gradient(90deg,#6a9955 0 1.4px,transparent 1.4px 2px);opacity:.5"></div>
<div class="a" style="left:140px;top:53px;width:36px;height:3px;background:repeating-linear-gradient(90deg,#6a9955 0 1.4px,transparent 1.4px 2px);opacity:.5"></div>
<div class="a" style="left:0px;top:57px;width:2px;height:3px;background:repeating-linear-gradient(90deg,#cccccc 0 1.4px,transparent 1.4px 2px);opacity:.5"></div>
<div class="a" style="left:2px;top:57px;width:16px;height:3px;background:repeating-linear-gradient(90deg,#4ec9b0 0 1.4px,transparent 1.4px 2px);opacity:.5"></div>
<div class="a" style="left:18px;top:57px;width:2px;height:3px;background:repeating-linear-gradient(90deg,#ffd700 0 1.4px,transparent 1.4px 2px);opacity:.5"></div>
<div class="a" style="left:20px;top:57px;width:2px;height:3px;background:repeating-linear-gradient(90deg,#da70d6 0 1.4px,transparent 1.4px 2px);opacity:.5"></div>
<div class="a" style="left:4px;top:61px;width:4px;height:3px;background:repeating-linear-gradient(90deg,#6a9955 0 1.4px,transparent 1.4px 2px);opacity:.5"></div>
<div class="a" style="left:10px;top:61px;width:68px;height:3px;background:repeating-linear-gradient(90deg,#6a9955 0 1.4px,transparent 1.4px 2px);opacity:.5"></div>
<div class="a" style="left:4px;top:65px;width:24px;height:3px;background:repeating-linear-gradient(90deg,#9cdcfe 0 1.4px,transparent 1.4px 2px);opacity:.5"></div>
<div class="a" style="left:28px;top:65px;width:2px;height:3px;background:repeating-linear-gradient(90deg,#cccccc 0 1.4px,transparent 1.4px 2px);opacity:.5"></div>
<div class="a" style="left:32px;top:65px;width:2px;height:3px;background:repeating-linear-gradient(90deg,#179fff 0 1.4px,transparent 1.4px 2px);opacity:.5"></div>
<div class="a" style="left:8px;top:69px;width:24px;height:3px;background:repeating-linear-gradient(90deg,#4ec9b0 0 1.4px,transparent 1.4px 2px);opacity:.5"></div>
<div class="a" style="left:32px;top:69px;width:2px;height:3px;background:repeating-linear-gradient(90deg,#cccccc 0 1.4px,transparent 1.4px 2px);opacity:.5"></div>
<div class="a" style="left:8px;top:73px;width:28px;height:3px;background:repeating-linear-gradient(90deg,#4ec9b0 0 1.4px,transparent 1.4px 2px);opacity:.5"></div>
<div class="a" style="left:36px;top:73px;width:2px;height:3px;background:repeating-linear-gradient(90deg,#cccccc 0 1.4px,transparent 1.4px 2px);opacity:.5"></div>
<div class="a" style="left:8px;top:77px;width:30px;height:3px;background:repeating-linear-gradient(90deg,#4ec9b0 0 1.4px,transparent 1.4px 2px);opacity:.5"></div>
<div class="a" style="left:38px;top:77px;width:2px;height:3px;background:repeating-linear-gradient(90deg,#cccccc 0 1.4px,transparent 1.4px 2px);opacity:.5"></div>
<div class="a" style="left:8px;top:81px;width:28px;height:3px;background:repeating-linear-gradient(90deg,#4ec9b0 0 1.4px,transparent 1.4px 2px);opacity:.5"></div>
<div class="a" style="left:36px;top:81px;width:2px;height:3px;background:repeating-linear-gradient(90deg,#cccccc 0 1.4px,transparent 1.4px 2px);opacity:.5"></div>
<div class="a" style="left:8px;top:85px;width:26px;height:3px;background:repeating-linear-gradient(90deg,#4ec9b0 0 1.4px,transparent 1.4px 2px);opacity:.5"></div>
<div class="a" style="left:34px;top:85px;width:2px;height:3px;background:repeating-linear-gradient(90deg,#cccccc 0 1.4px,transparent 1.4px 2px);opacity:.5"></div>
<div class="a" style="left:4px;top:89px;width:2px;height:3px;background:repeating-linear-gradient(90deg,#179fff 0 1.4px,transparent 1.4px 2px);opacity:.5"></div>
<div class="a" style="left:6px;top:89px;width:2px;height:3px;background:repeating-linear-gradient(90deg,#cccccc 0 1.4px,transparent 1.4px 2px);opacity:.5"></div>
<div class="a" style="left:4px;top:97px;width:64px;height:3px;background:repeating-linear-gradient(90deg,#6a9955 0 1.4px,transparent 1.4px 2px);opacity:.5"></div>
<div class="a" style="left:4px;top:101px;width:14px;height:3px;background:repeating-linear-gradient(90deg,#9cdcfe 0 1.4px,transparent 1.4px 2px);opacity:.5"></div>
<div class="a" style="left:18px;top:101px;width:2px;height:3px;background:repeating-linear-gradient(90deg,#cccccc 0 1.4px,transparent 1.4px 2px);opacity:.5"></div>
<div class="a" style="left:22px;top:101px;width:2px;height:3px;background:repeating-linear-gradient(90deg,#179fff 0 1.4px,transparent 1.4px 2px);opacity:.5"></div>
<div class="a" style="left:8px;top:105px;width:26px;height:3px;background:repeating-linear-gradient(90deg,#4ec9b0 0 1.4px,transparent 1.4px 2px);opacity:.5"></div>
<div class="a" style="left:34px;top:105px;width:2px;height:3px;background:repeating-linear-gradient(90deg,#cccccc 0 1.4px,transparent 1.4px 2px);opacity:.5"></div>
<div class="a" style="left:8px;top:109px;width:32px;height:3px;background:repeating-linear-gradient(90deg,#4ec9b0 0 1.4px,transparent 1.4px 2px);opacity:.5"></div>
<div class="a" style="left:40px;top:109px;width:2px;height:3px;background:repeating-linear-gradient(90deg,#cccccc 0 1.4px,transparent 1.4px 2px);opacity:.5"></div>
<div class="a" style="left:8px;top:113px;width:24px;height:3px;background:repeating-linear-gradient(90deg,#4ec9b0 0 1.4px,transparent 1.4px 2px);opacity:.5"></div>
<div class="a" style="left:32px;top:113px;width:2px;height:3px;background:repeating-linear-gradient(90deg,#cccccc 0 1.4px,transparent 1.4px 2px);opacity:.5"></div>
<div class="a" style="left:8px;top:117px;width:22px;height:3px;background:repeating-linear-gradient(90deg,#4ec9b0 0 1.4px,transparent 1.4px 2px);opacity:.5"></div>
<div class="a" style="left:30px;top:117px;width:2px;height:3px;background:repeating-linear-gradient(90deg,#cccccc 0 1.4px,transparent 1.4px 2px);opacity:.5"></div>
<div class="a" style="left:8px;top:121px;width:20px;height:3px;background:repeating-linear-gradient(90deg,#4ec9b0 0 1.4px,transparent 1.4px 2px);opacity:.5"></div>
<div class="a" style="left:30px;top:121px;width:4px;height:3px;background:repeating-linear-gradient(90deg,#6a9955 0 1.4px,transparent 1.4px 2px);opacity:.5"></div>
<div class="a" style="left:36px;top:121px;width:28px;height:3px;background:repeating-linear-gradient(90deg,#6a9955 0 1.4px,transparent 1.4px 2px);opacity:.5"></div>
<div class="a" style="left:4px;top:125px;width:2px;height:3px;background:repeating-linear-gradient(90deg,#179fff 0 1.4px,transparent 1.4px 2px);opacity:.5"></div>
<div class="a" style="left:6px;top:125px;width:2px;height:3px;background:repeating-linear-gradient(90deg,#cccccc 0 1.4px,transparent 1.4px 2px);opacity:.5"></div>
<div class="a" style="left:4px;top:133px;width:4px;height:3px;background:repeating-linear-gradient(90deg,#6a9955 0 1.4px,transparent 1.4px 2px);opacity:.5"></div>
<div class="a" style="left:10px;top:133px;width:144px;height:3px;background:repeating-linear-gradient(90deg,#6a9955 0 1.4px,transparent 1.4px 2px);opacity:.5"></div>
<div class="a" style="left:4px;top:137px;width:18px;height:3px;background:repeating-linear-gradient(90deg,#9cdcfe 0 1.4px,transparent 1.4px 2px);opacity:.5"></div>
<div class="a" style="left:22px;top:137px;width:2px;height:3px;background:repeating-linear-gradient(90deg,#cccccc 0 1.4px,transparent 1.4px 2px);opacity:.5"></div>
<div class="a" style="left:26px;top:137px;width:4px;height:3px;background:repeating-linear-gradient(90deg,#179fff 0 1.4px,transparent 1.4px 2px);opacity:.5"></div>
<div class="a" style="left:30px;top:137px;width:2px;height:3px;background:repeating-linear-gradient(90deg,#cccccc 0 1.4px,transparent 1.4px 2px);opacity:.5"></div>
<div class="a" style="left:4px;top:145px;width:4px;height:3px;background:repeating-linear-gradient(90deg,#6a9955 0 1.4px,transparent 1.4px 2px);opacity:.5"></div>
<div class="a" style="left:10px;top:145px;width:38px;height:3px;background:repeating-linear-gradient(90deg,#6a9955 0 1.4px,transparent 1.4px 2px);opacity:.5"></div>
<div class="a" style="left:50px;top:145px;width:58px;height:3px;background:repeating-linear-gradient(90deg,#6a9955 0 1.4px,transparent 1.4px 2px);opacity:.5"></div>
<div class="a" style="left:4px;top:149px;width:18px;height:3px;background:repeating-linear-gradient(90deg,#9cdcfe 0 1.4px,transparent 1.4px 2px);opacity:.5"></div>
<div class="a" style="left:22px;top:149px;width:2px;height:3px;background:repeating-linear-gradient(90deg,#cccccc 0 1.4px,transparent 1.4px 2px);opacity:.5"></div>
<div class="a" style="left:26px;top:149px;width:2px;height:3px;background:repeating-linear-gradient(90deg,#179fff 0 1.4px,transparent 1.4px 2px);opacity:.5"></div>
<div class="a" style="left:28px;top:149px;width:24px;height:3px;background:repeating-linear-gradient(90deg,#4ec9b0 0 1.4px,transparent 1.4px 2px);opacity:.5"></div>
<div class="a" style="left:52px;top:149px;width:2px;height:3px;background:repeating-linear-gradient(90deg,#179fff 0 1.4px,transparent 1.4px 2px);opacity:.5"></div>
<div class="a" style="left:0px;top:153px;width:2px;height:3px;background:repeating-linear-gradient(90deg,#da70d6 0 1.4px,transparent 1.4px 2px);opacity:.5"></div>
<div class="a" style="left:2px;top:153px;width:2px;height:3px;background:repeating-linear-gradient(90deg,#ffd700 0 1.4px,transparent 1.4px 2px);opacity:.5"></div>
<div class="a" style="left:0px;top:157px;width:12px;height:3px;background:repeating-linear-gradient(90deg,#c586c0 0 1.4px,transparent 1.4px 2px);opacity:.5"></div>
<div class="a" style="left:14px;top:157px;width:10px;height:3px;background:repeating-linear-gradient(90deg,#569cd6 0 1.4px,transparent 1.4px 2px);opacity:.5"></div>
<div class="a" style="left:26px;top:157px;width:18px;height:3px;background:repeating-linear-gradient(90deg,#4ec9b0 0 1.4px,transparent 1.4px 2px);opacity:.5"></div>
<div class="a" style="left:46px;top:157px;width:2px;height:3px;background:repeating-linear-gradient(90deg,#ffd700 0 1.4px,transparent 1.4px 2px);opacity:.5"></div>
<div class="a" style="left:50px;top:157px;width:2px;height:3px;background:repeating-linear-gradient(90deg,#ffd700 0 1.4px,transparent 1.4px 2px);opacity:.5"></div>
</div>
<div class="a" style="left:3030px;top:260px;width:8px;height:744px;background:linear-gradient(90deg,rgba(0,0,0,0),rgba(0,0,0,.45))"></div>
<div class="a" style="left:2056px;top:260px;width:982px;height:8px;background:linear-gradient(rgba(0,0,0,.5),rgba(0,0,0,0))"></div>
<div class="a" style="left:3172px;top:260px;width:2px;height:744px;background:#161616;"></div>
<div class="a" style="left:3174px;top:619px;width:26px;height:4px;background:#8a8a8a;"></div>
<div class="a" style="left:2056px;top:1006px;width:1142px;height:68px;background:#181818;"></div>
<div class="a" style="left:2056px;top:1072px;width:1142px;height:2px;background:#2b2b2b;"></div>
<div class="a" style="left:2056px;top:1006px;width:338px;height:66px;background:#181818;"></div>
<div class="a" style="left:2392px;top:1006px;width:2px;height:66px;background:#2b2b2b;"></div>
<svg class="a" style="left:2082px;top:1032px;" width="24" height="17" viewBox="0 0 24 17"><path d="M0.5 2.3H11.6M6.05 2.3V16.2" stroke="#519aba" stroke-width="2.5" fill="none"/><path d="M22.6 4.3C21.7 2.6 20.1 1.5 17.9 1.5C15.3 1.5 13.6 2.9 13.6 4.8C13.6 6.9 15.4 7.7 18 8.4C20.9 9.2 22.8 10.1 22.8 12.3C22.8 14.6 20.8 15.9 17.9 15.9C15.6 15.9 13.8 14.9 12.8 13.2" fill="none" stroke="#519aba" stroke-width="2.4"/></svg>
<div class="a ui" style="left:2118px;top:1006px;height:68px;line-height:68px;font-size:26px;color:#9d9d9d;letter-spacing:0.9px;font-weight:normal;font-style:normal;font-family:'Liberation Sans',sans-serif;">app.component.ts</div>
<div class="a" style="left:2394px;top:1006px;width:372px;height:68px;background:#1f1f1f;"></div>
<div class="a" style="left:2764px;top:1006px;width:2px;height:68px;background:#2b2b2b;"></div>
<div class="a" style="left:2394px;top:1006px;width:370px;height:2px;background:#0078d4;"></div>
<svg class="a" style="left:2423px;top:1032px;" width="22" height="18" viewBox="0 0 22 18"><path d="M7 2L1.5 9L7 16M15 2L20.5 9L15 16" fill="none" stroke="#e37933" stroke-width="2.6" stroke-linejoin="miter"/></svg>
<div class="a ui" style="left:2459px;top:1006px;height:68px;line-height:68px;font-size:26px;color:#ffffff;letter-spacing:0.9px;font-weight:normal;font-style:normal;font-family:'Liberation Sans',sans-serif;">app.component.html</div>
<svg class="a" style="left:2727px;top:1030px;" width="18" height="18" viewBox="0 0 18 18"><path d="M1 1L17 17M17 1L1 17" fill="none" stroke="#ffffff" stroke-width="2.2"/></svg>
<svg class="a" style="left:3039px;top:1026px;" width="22" height="28" viewBox="0 0 22 28"><path d="M2 2L20 14L2 26Z" fill="none" stroke="#cccccc" stroke-width="2.4" stroke-linejoin="round"/></svg>
<svg class="a" style="left:3089px;top:1024px;" width="28" height="28" viewBox="0 0 28 28"><rect x="1.2" y="1.2" width="25.6" height="25.6" rx="3.5" fill="none" stroke="#cccccc" stroke-width="2.4"/><path d="M14 1.2V26.8" stroke="#cccccc" stroke-width="2.4"/></svg>
<svg class="a" style="left:3140px;top:1035px;" width="28.4" height="8" viewBox="0 0 28.4 8"><circle cx="4.0" cy="4" r="2.6" fill="#cccccc"/><circle cx="14.2" cy="4" r="2.6" fill="#cccccc"/><circle cx="24.4" cy="4" r="2.6" fill="#cccccc"/></svg>
<div class="a" style="left:2086.5px;top:1074px;height:44px;display:flex;align-items:center;white-space:pre"><span class="ui" style="font-size:26px;letter-spacing:0.9px;color:#a9a9a9;line-height:44px;position:relative;top:1px">src</span><svg style="margin:0 10.25px 0 11.25px;position:relative;top:0px" width="11" height="20" viewBox="0 0 11 20"><path d="M1.2 1.2L9.8 10L1.2 18.8" fill="none" stroke="#a9a9a9" stroke-width="2"/></svg><span class="ui" style="font-size:26px;letter-spacing:0.9px;color:#a9a9a9;line-height:44px;position:relative;top:1px">app</span><svg style="margin:0 10.25px 0 11.25px;position:relative;top:0px" width="11" height="20" viewBox="0 0 11 20"><path d="M1.2 1.2L9.8 10L1.2 18.8" fill="none" stroke="#a9a9a9" stroke-width="2"/></svg><svg style="margin-left:8px;margin-right:14px;position:relative;top:-2px" width="22" height="18" viewBox="0 0 22 18"><path d="M7 2L1.5 9L7 16M15 2L20.5 9L15 16" fill="none" stroke="#e37933" stroke-width="2.6"/></svg><span class="ui" style="font-size:26px;letter-spacing:0.9px;color:#a9a9a9;line-height:44px;position:relative;top:1px">app.component.html</span><svg style="margin:0 10.25px 0 11.25px;position:relative;top:0px" width="11" height="20" viewBox="0 0 11 20"><path d="M1.2 1.2L9.8 10L1.2 18.8" fill="none" stroke="#a9a9a9" stroke-width="2"/></svg><span class="ui" style="font-size:26px;color:#a9a9a9;line-height:44px;letter-spacing:1px;position:relative;top:1px">...</span></div>
<div class="a ui" style="left:2187px;top:1118px;height:31px;line-height:31px;font-size:21.5px;color:#999999;letter-spacing:0.0px;font-weight:normal;font-style:normal;font-family:'Liberation Sans',sans-serif;">Go to component</div>
<div class="a" style="left:2056px;top:1118px;width:982px;height:742px;overflow:hidden">
<div class="hl" style="left:131px;top:67px;width:851px;height:36px"></div>
<div class="a ln" style="left:-2px;top:31px;width:80px">1</div>
<div class="a code" style="left:131px;top:31px"><span style="color:#808080">&lt;</span><span style="color:#569cd6">app-demo</span><span style="color:#808080">&gt;&lt;/</span><span style="color:#569cd6">app-demo</span><span style="color:#808080">&gt;</span></div>
<div class="a ln cur" style="left:-2px;top:67px;width:80px">2</div>
</div>
<div class="a" style="left:2212px;top:1185px;width:4px;height:35px;background:#aeafad;"></div>
<div class="a" style="left:3046px;top:1118px;width:130px;height:742px;overflow:hidden">
<div class="a" style="left:0px;top:1px;width:2px;height:3px;background:repeating-linear-gradient(90deg,#808080 0 1.4px,transparent 1.4px 2px);opacity:.5"></div>
<div class="a" style="left:2px;top:1px;width:16px;height:3px;background:repeating-linear-gradient(90deg,#569cd6 0 1.4px,transparent 1.4px 2px);opacity:.5"></div>
<div class="a" style="left:18px;top:1px;width:6px;height:3px;background:repeating-linear-gradient(90deg,#808080 0 1.4px,transparent 1.4px 2px);opacity:.5"></div>
<div class="a" style="left:24px;top:1px;width:16px;height:3px;background:repeating-linear-gradient(90deg,#569cd6 0 1.4px,transparent 1.4px 2px);opacity:.5"></div>
<div class="a" style="left:40px;top:1px;width:2px;height:3px;background:repeating-linear-gradient(90deg,#808080 0 1.4px,transparent 1.4px 2px);opacity:.5"></div>
</div>
<div class="a" style="left:3172px;top:1118px;width:2px;height:742px;background:#161616;"></div>
<div class="a" style="left:3174px;top:1176px;width:26px;height:4px;background:#8a8a8a;"></div>
<div class="a ui" style="left:950px;top:1862px;height:70px;line-height:70px;font-size:22px;color:#9d9d9d;letter-spacing:-0.6px;font-weight:normal;font-style:normal;font-family:'Liberation Sans',sans-serif;">PROBLEMS</div>
<div class="a ui" style="left:1117px;top:1862px;height:70px;line-height:70px;font-size:22px;color:#9d9d9d;letter-spacing:-0.3px;font-weight:normal;font-style:normal;font-family:'Liberation Sans',sans-serif;">OUTPUT</div>
<div class="a ui" style="left:1257px;top:1862px;height:70px;line-height:70px;font-size:22px;color:#9d9d9d;letter-spacing:-0.3px;font-weight:normal;font-style:normal;font-family:'Liberation Sans',sans-serif;">DEBUG CONSOLE</div>
<div class="a ui" style="left:1495px;top:1862px;height:70px;line-height:70px;font-size:22px;color:#9d9d9d;letter-spacing:-0.4px;font-weight:normal;font-style:normal;font-family:'Liberation Sans',sans-serif;">COMMENTS</div>
<div class="a ui" style="left:1672px;top:1862px;height:70px;line-height:70px;font-size:22px;color:#9d9d9d;letter-spacing:-0.3px;font-weight:normal;font-style:normal;font-family:'Liberation Sans',sans-serif;">PORTS</div>
<div class="a ui" style="left:1795px;top:1862px;height:70px;line-height:70px;font-size:22px;color:#cccccc;letter-spacing:-0.25px;font-weight:normal;font-style:normal;font-family:'Liberation Sans',sans-serif;">TERMINAL</div>
<div class="a" style="left:1791px;top:1917px;width:119px;height:2px;background:#0078d4;"></div>
<svg class="a" style="left:2957px;top:1882px;" width="28" height="28" viewBox="0 0 28 28"><path d="M14 1V27M1 14H27" stroke="#cccccc" stroke-width="2.2"/></svg>
<svg class="a" style="left:2996px;top:1892px;" width="16" height="10" viewBox="0 0 16 10"><path d="M1.5 1.5L8.0 8.5L14.5 1.5" fill="none" stroke="#cccccc" stroke-width="2"/></svg>
<svg class="a" style="left:3034.5px;top:1893px;" width="29.6" height="8" viewBox="0 0 29.6 8"><circle cx="4.0" cy="4" r="2.5" fill="#cccccc"/><circle cx="14.8" cy="4" r="2.5" fill="#cccccc"/><circle cx="25.6" cy="4" r="2.5" fill="#cccccc"/></svg>
<svg class="a" style="left:3091px;top:1889px;" width="22" height="13" viewBox="0 0 22 13"><path d="M1.5 11.5L11 2L20.5 11.5" fill="none" stroke="#cccccc" stroke-width="2.2"/></svg>
<svg class="a" style="left:3145px;top:1887px;" width="19" height="19" viewBox="0 0 19 19"><path d="M1 1L18 18M18 1L1 18" fill="none" stroke="#cccccc" stroke-width="2.2"/></svg>
<div class="a mono" style="left:950px;top:1932px;height:28px;line-height:28px;font-size:24px;letter-spacing:0px"><span style="color:#17c37b">CREATE</span><span style="color:#cccccc"> src/app/demo/demo.component.css (0 bytes)</span></div>
<div class="a mono" style="left:950px;top:1960px;height:28px;line-height:28px;font-size:24px;letter-spacing:0px"><span style="color:#17c37b">CREATE</span><span style="color:#cccccc"> src/app/demo/demo.component.html (19 bytes)</span></div>
<div class="a mono" style="left:950px;top:1988px;height:28px;line-height:28px;font-size:24px;letter-spacing:0px"><span style="color:#17c37b">CREATE</span><span style="color:#cccccc"> src/app/demo/demo.component.spec.ts (585 bytes)</span></div>
<div class="a mono" style="left:950px;top:2016px;height:28px;line-height:28px;font-size:24px;letter-spacing:0px"><span style="color:#17c37b">CREATE</span><span style="color:#cccccc"> src/app/demo/demo.component.ts (267 bytes)</span></div>
<div class="a mono" style="left:950px;top:2044px;height:28px;line-height:28px;font-size:24px;letter-spacing:0px"><span style="color:#11a8cd">UPDATE</span><span style="color:#cccccc"> src/app/demo/demo.module.ts (261 bytes)</span></div>
<div class="a" style="left:924px;top:2078px;width:16px;height:16px;border-radius:8px;border:2.5px solid #6e6e6e"></div>
<svg class="a" style="left:951px;top:2077px;" width="16" height="18" viewBox="0 0 16 18"><path d="M1 9H14M8 3L14 9L8 15" fill="none" stroke="#23d18b" stroke-width="2.6"/></svg>
<div class="a mono" style="left:950px;top:2072px;height:28px;line-height:28px;font-size:24px;letter-spacing:0px;font-weight:bold">   <span style="color:#29b8db">fudao-frontend</span> <span style="color:#3b8eea">git:(</span><span style="color:#f14c4c">main</span><span style="color:#3b8eea">)</span></div>
<svg class="a" style="left:1357px;top:2080px;" width="14" height="17" viewBox="0 0 14 17"><path d="M3 14L12 2M2 6C5 8 8 12 9 16" fill="none" stroke="#e5e510" stroke-width="2.4"/></svg>
<div class="a" style="left:1384px;top:2076px;width:14px;height:21px;border:2px solid #cccccc"></div>
<div class="a" style="left:2744px;top:1930px;width:28px;height:168px;background:#121212;"></div>
<div class="a" style="left:2745px;top:1930px;width:9px;height:12px;background:#1d7fa3;"></div>
<div class="a" style="left:2745px;top:1955px;width:9px;height:24px;background:#1d7fa3;"></div>
<div class="a" style="left:2745px;top:2066px;width:9px;height:24px;background:#5a5a5a;"></div>
<div class="a" style="left:2772px;top:1930px;width:2px;height:168px;background:#2b2b2b;"></div>
<div class="a" style="left:2774px;top:2062px;width:424px;height:36px;background:#323237;"></div>
<div class="a" style="left:2774px;top:2062px;width:3px;height:36px;background:#0078d4;"></div>
<div class="a" style="left:2774px;top:1930px;width:424px;height:168px;overflow:hidden">
<svg class="a" style="left:22px;top:7px;" width="29" height="29" viewBox="0 0 29 29"><rect x="1.2" y="1.2" width="26.6" height="26.6" rx="2.5" fill="none" stroke="#cccccc" stroke-width="2.2"/><path d="M7 8L13 13.5L7 19M14.5 21.5H22" fill="none" stroke="#cccccc" stroke-width="2.2"/></svg>
<div class="a ui" style="left:60px;top:0px;height:44px;line-height:44px;font-size:26px;color:#cccccc;letter-spacing:0.9px;font-weight:normal;font-style:normal;font-family:'Liberation Sans',sans-serif;">node</div>
<svg class="a" style="left:22px;top:51px;" width="29" height="29" viewBox="0 0 29 29"><rect x="1.2" y="1.2" width="26.6" height="26.6" rx="2.5" fill="none" stroke="#cccccc" stroke-width="2.2"/><path d="M7 8L13 13.5L7 19M14.5 21.5H22" fill="none" stroke="#cccccc" stroke-width="2.2"/></svg>
<div class="a ui" style="left:60px;top:44px;height:44px;line-height:44px;font-size:26px;color:#cccccc;letter-spacing:0.9px;font-weight:normal;font-style:normal;font-family:'Liberation Sans',sans-serif;">zsh</div>
<svg class="a" style="left:22px;top:95px;" width="29" height="29" viewBox="0 0 29 29"><rect x="1.2" y="1.2" width="26.6" height="26.6" rx="2.5" fill="none" stroke="#cccccc" stroke-width="2.2"/><path d="M7 8L13 13.5L7 19M14.5 21.5H22" fill="none" stroke="#cccccc" stroke-width="2.2"/></svg>
<div class="a ui" style="left:60px;top:88px;height:44px;line-height:44px;font-size:26px;color:#cccccc;letter-spacing:0.9px;font-weight:normal;font-style:normal;font-family:'Liberation Sans',sans-serif;">zsh</div>
<svg class="a" style="left:22px;top:139px;" width="29" height="29" viewBox="0 0 29 29"><rect x="1.2" y="1.2" width="26.6" height="26.6" rx="2.5" fill="none" stroke="#cccccc" stroke-width="2.2"/><path d="M7 8L13 13.5L7 19M14.5 21.5H22" fill="none" stroke="#cccccc" stroke-width="2.2"/></svg>
<div class="a ui" style="left:60px;top:132px;height:44px;line-height:44px;font-size:26px;color:#cccccc;letter-spacing:0.9px;font-weight:normal;font-style:normal;font-family:'Liberation Sans',sans-serif;">zsh</div>
</div>
<div class="a" style="left:114px;top:2100px;width:66px;height:40px;background:#0078d4;border-bottom-left-radius:18px"></div>
<svg class="a" style="left:134px;top:2107px;" width="26" height="26" viewBox="0 0 26 26"><path d="M3 17L9 11L3 5M23 9L17 15L23 21" fill="none" stroke="#ffffff" stroke-width="2.4" transform="translate(0,0)"/></svg>
<svg class="a" style="left:197px;top:2107px;" width="28" height="26" viewBox="0 0 28 26"><path d="M2 2L14 13L2 24Z" fill="none" stroke="#cccccc" stroke-width="2.2" stroke-linejoin="round"/><path d="M9 2L24 13L9 24" fill="none" stroke="#cccccc" stroke-width="2.2" stroke-linejoin="round"/></svg>
<div class="a ui" style="left:237px;top:2100px;height:40px;line-height:40px;font-size:24px;color:#cccccc;letter-spacing:0.6px;font-weight:normal;font-style:normal;font-family:'Liberation Sans',sans-serif;">Run Testcases</div>
<svg class="a" style="left:433px;top:2107px;" width="26" height="26" viewBox="0 0 26 26"><circle cx="13" cy="13" r="11.5" fill="none" stroke="#cccccc" stroke-width="2.2"/><path d="M8.5 8.5L17.5 17.5M17.5 8.5L8.5 17.5" stroke="#cccccc" stroke-width="2.2"/></svg>
<div class="a ui" style="left:467px;top:2100px;height:40px;line-height:40px;font-size:24px;color:#cccccc;letter-spacing:0px;font-weight:normal;font-style:normal;font-family:'Liberation Sans',sans-serif;">0</div>
<svg class="a" style="left:490px;top:2106px;" width="27" height="26" viewBox="0 0 27 26"><path d="M13.5 2L25.5 24H1.5Z" fill="none" stroke="#cccccc" stroke-width="2.2" stroke-linejoin="round"/><path d="M13.5 9V17M13.5 19.5V22" stroke="#cccccc" stroke-width="2.4"/></svg>
<div class="a ui" style="left:524px;top:2100px;height:40px;line-height:40px;font-size:24px;color:#cccccc;letter-spacing:0px;font-weight:normal;font-style:normal;font-family:'Liberation Sans',sans-serif;">0</div>
<svg class="a" style="left:573px;top:2106px;" width="26" height="28" viewBox="0 0 26 28"><g fill="none" stroke="#cccccc" stroke-width="2.2"><circle cx="13" cy="11" r="3"/><path d="M13 14L8 27M13 14L18 27M9.5 22H16.5"/><path d="M7 5C4 8 4 14 7 17M19 5C22 8 22 14 19 17M3.5 2C-0.5 7 -0.5 15 3.5 20M22.5 2C26.5 7 26.5 15 22.5 20"/></g></svg>
<div class="a ui" style="left:606px;top:2100px;height:40px;line-height:40px;font-size:24px;color:#cccccc;letter-spacing:0px;font-weight:normal;font-style:normal;font-family:'Liberation Sans',sans-serif;">0</div>
<div class="a ui" style="left:653px;top:2100px;height:40px;line-height:40px;font-size:24px;color:#cccccc;letter-spacing:0.75px;font-weight:normal;font-style:normal;font-family:'Liberation Sans',sans-serif;">-- INSERT --</div>
<div class="a ui" style="left:2336px;top:2100px;height:40px;line-height:40px;font-size:24px;color:#cccccc;letter-spacing:0.65px;font-weight:normal;font-style:normal;font-family:'Liberation Sans',sans-serif;">Ln 2, Col 3</div>
<div class="a ui" style="left:2490px;top:2100px;height:40px;line-height:40px;font-size:24px;color:#cccccc;letter-spacing:0.65px;font-weight:normal;font-style:normal;font-family:'Liberation Sans',sans-serif;">Spaces: 4</div>
<div class="a ui" style="left:2634px;top:2100px;height:40px;line-height:40px;font-size:24px;color:#cccccc;letter-spacing:0.65px;font-weight:normal;font-style:normal;font-family:'Liberation Sans',sans-serif;">UTF-8</div>
<div class="a ui" style="left:2740px;top:2100px;height:40px;line-height:40px;font-size:24px;color:#cccccc;letter-spacing:0.65px;font-weight:normal;font-style:normal;font-family:'Liberation Sans',sans-serif;">LF</div>
<svg class="a" style="left:2798px;top:2106px;" width="27" height="28" viewBox="0 0 27 28"><g fill="none" stroke="#cccccc" stroke-width="2.2"><path d="M8 2C4 2 4 4 4 8C4 11 3 13 1 13C3 13 4 15 4 18C4 22 4 24 8 24"/><circle cx="19" cy="20" r="6"/><path d="M16.5 17.5L21.5 22.5M21.5 17.5L16.5 22.5" stroke-width="1.8"/></g></svg>
<div class="a ui" style="left:2835px;top:2100px;height:40px;line-height:40px;font-size:24px;color:#cccccc;letter-spacing:0.65px;font-weight:normal;font-style:normal;font-family:'Liberation Sans',sans-serif;">HTML</div>
<svg class="a" style="left:2930px;top:2107px;" width="30" height="26" viewBox="0 0 33 29"><g><ellipse cx="16.5" cy="20" rx="16" ry="8.6" fill="#cccccc"/><path d="M6.4 14.2H26.4V23Q26.4 25.8 16.4 26Q6.4 25.8 6.4 23Z" fill="#181818"/><rect x="4.8" y="1.7" width="11.4" height="11" rx="4.6" fill="#181818" stroke="#cccccc" stroke-width="3"/><rect x="16.8" y="1.7" width="11.4" height="11" rx="4.6" fill="#181818" stroke="#cccccc" stroke-width="3"/><rect x="11.3" y="16.5" width="2.7" height="5.8" rx="1.35" fill="#cccccc"/><rect x="18.6" y="16.5" width="2.7" height="5.8" rx="1.35" fill="#cccccc"/></g></svg>
<svg class="a" style="left:2990px;top:2108px;" width="30" height="24" viewBox="0 0 30 24"><path d="M1 13L7 19L19 3M11 16L14 19L29 3" fill="none" stroke="#cccccc" stroke-width="2.2"/></svg>
<div class="a ui" style="left:3026px;top:2100px;height:40px;line-height:40px;font-size:24px;color:#cccccc;letter-spacing:0.65px;font-weight:normal;font-style:normal;font-family:'Liberation Sans',sans-serif;">Prettier</div>
<svg class="a" style="left:3142px;top:2104px;" width="28" height="30" viewBox="0 0 28 30"><path d="M4 21V13C4 7 8 4 13 4C18 4 21 7 21 13V21L24 24H1Z" fill="none" stroke="#cccccc" stroke-width="2.2" stroke-linejoin="round"/><path d="M10 26C10 28 16 28 16 26" fill="none" stroke="#cccccc" stroke-width="2.2"/><circle cx="21" cy="5" r="5" fill="#cccccc"/></svg>
</body></html>
